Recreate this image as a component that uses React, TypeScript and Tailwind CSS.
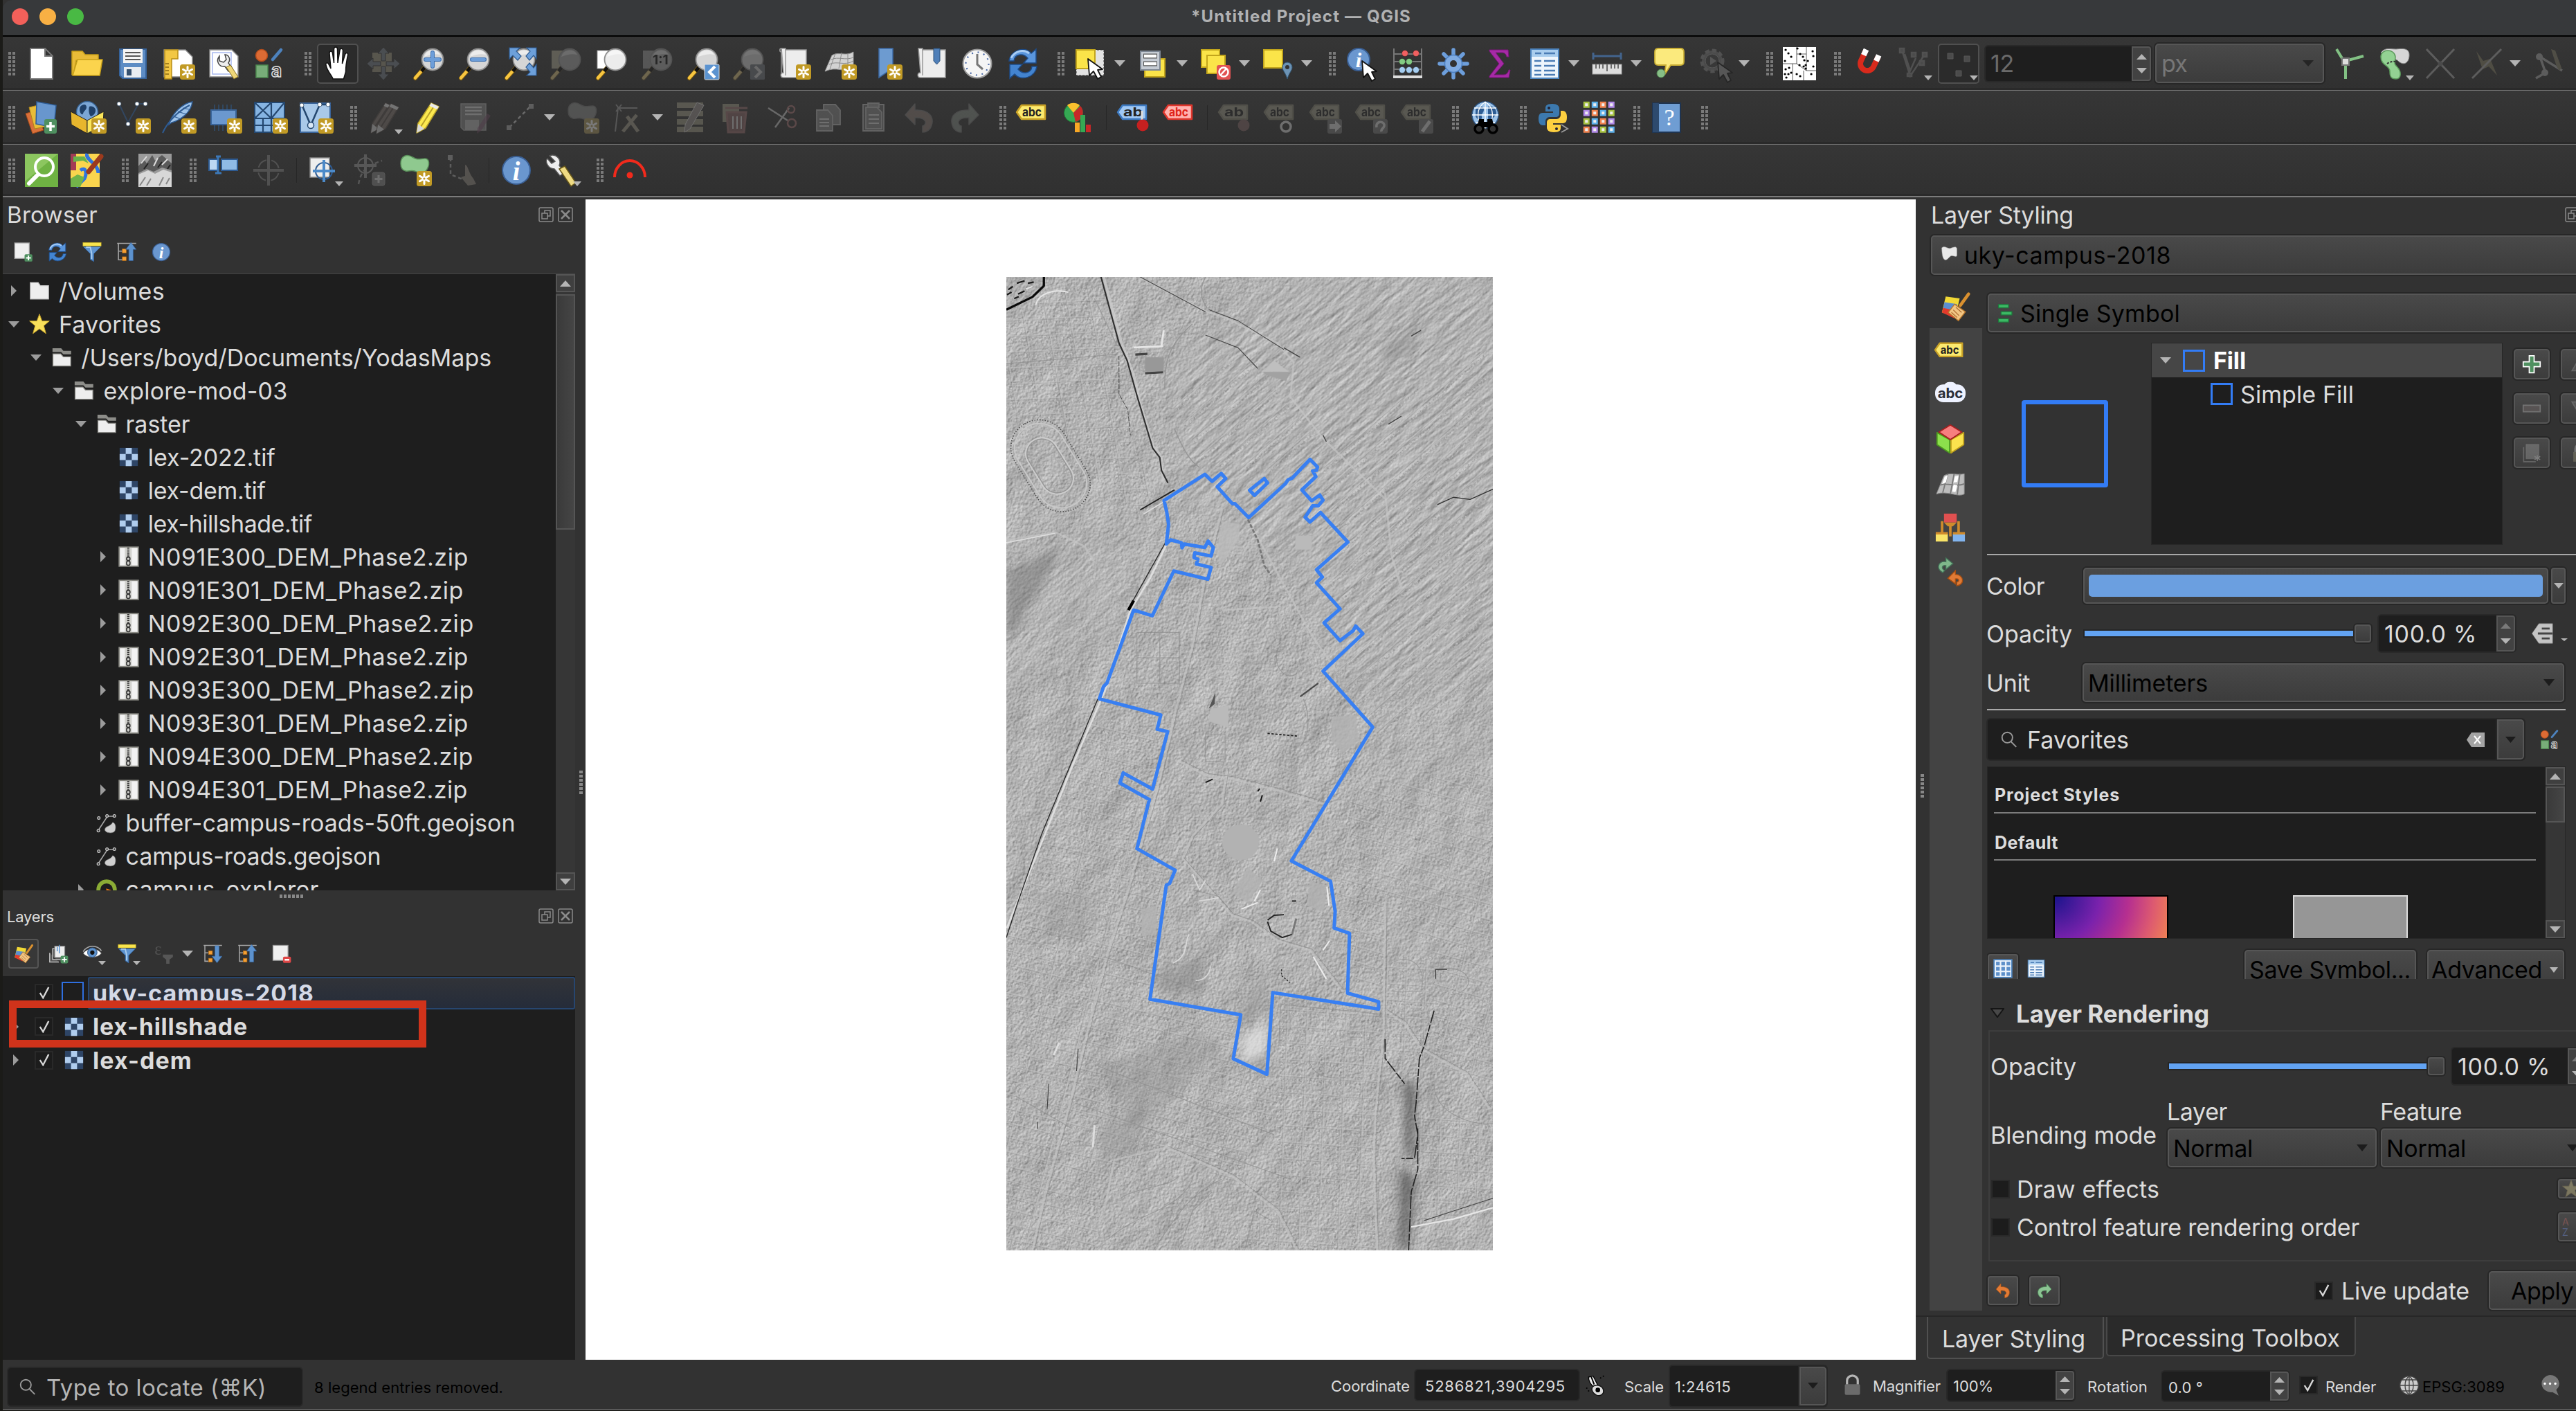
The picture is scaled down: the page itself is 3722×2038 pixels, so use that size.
import React, { useLayoutEffect, useRef, type ReactNode } from "react";

function T({ c = "", w, children }: { c?: string; w?: number; children: string }) {
  const ref = useRef<HTMLSpanElement>(null);
  useLayoutEffect(() => {
    const el = ref.current;
    if (!el || !w) return;
    el.style.letterSpacing = "0px";
    const natural = el.getBoundingClientRect().width;
    el.style.letterSpacing = `${(w - natural) / children.length}px`;
  }, [w, children]);
  return (
    <span ref={ref} className={`inline-block shrink-0 -translate-x-px translate-y-px whitespace-pre ${c}`}>
      {children}
    </span>
  );
}

/* ---------- icon parts ---------- */
const Badge = ({ x = 26, y = 25 }: { x?: number; y?: number }) => (
  <g transform={`translate(${x} ${y})`}>
    <rect width="22" height="22" rx="3.5" fill="#c19a25" />
    <path d="M11 3.5v15M4.5 7.2l13 7.6M4.5 14.8l13-7.6" stroke="#fff" strokeWidth="3" strokeLinecap="round" />
    <circle cx="11" cy="11" r="1.6" fill="#c19a25" />
  </g>
);
const Glass = ({ fill = "#d6d6d6", children }: { fill?: string; children?: ReactNode }) => (
  <g>
    <path d="M4 45L17 30" stroke="#7a5a10" strokeWidth="6" strokeLinecap="round" />
    <path d="M4 44.500L12 35.500" stroke="#f8c640" strokeWidth="4.500" strokeLinecap="round" />
    <path d="M13 35l5-6" stroke="#111" strokeWidth="5" />
    <circle cx="29" cy="18" r="15.500" fill={fill} stroke="#8e8e8e" strokeWidth="1.800" />
    <path d="M17 14a12.500 12.500 0 0 1 23-3c-8-2-15 0-23 3z" fill="#fff" opacity=".55" />
    {children}
  </g>
);
const Label = ({ f = "#fcea6f", s = "#c9a227", t = "#222", text = "abc" }: { f?: string; s?: string; t?: string; text?: string }) => (
  <g>
    <path d="M1 16L8 6H42V26H8Z" fill={f} stroke={s} strokeWidth="2.500" strokeLinejoin="round" />
    <text x="9" y="21.500" fontSize="17" fontWeight="700" fontFamily="Inter, sans-serif" textLength="28" lengthAdjust="spacingAndGlyphs" fill={t}>
      {text}
    </text>
  </g>
);
const Node = ({ x, y, f = "#fff" }: { x: number; y: number; f?: string }) => <circle cx={x} cy={y} r="3" fill={f} stroke="#31475f" strokeWidth=".8" />;
const Pencil = ({ a = "#fce94f", b = "#b8a02a" }: { a?: string; b?: string }) => (
  <g>
    <path d="M27 3l11 5-19 31-13 7 2-14z" fill={a} stroke={b} strokeWidth="1.500" strokeLinejoin="round" />
    <path d="M32 6L12 37" stroke={b} strokeWidth="2" />
    <path d="M27 3l11 5-2.500 4-11-5z" fill="#e9e9e9" />
    <path d="M8 33l9 7-11 6z" fill="#d9d9d9" />
  </g>
);
const Refresh = () => (
  <g>
    <path d="M4 20C6 4 27-2 36 9l7-6v20H25l6-7C24 8 12 10 11 20z" fill="#5a96dd" stroke="#1e4b86" strokeWidth="1.500" />
    <path d="M44 28C42 44 21 50 12 39l-7 6V25h18l-6 7c7 8 19 6 20-4z" fill="#4384d0" stroke="#1e4b86" strokeWidth="1.500" />
    <path d="M7 16C12 5 25 3 33 9" stroke="#a9cdf5" strokeWidth="3" fill="none" />
  </g>
);
const Info = ({ r = 20, x = 24, y = 24 }: { r?: number; x?: number; y?: number }) => (
  <g>
    <circle cx={x} cy={y} r={r} fill="#6a97cf" stroke="#3a5f94" strokeWidth="2" />
    <text x={x} y={y + r * 0.68} textAnchor="middle" fontSize={r * 1.9} fontStyle="italic" fontWeight="700" fontFamily="Liberation Serif, serif" fill="#fff">
      i
    </text>
  </g>
);
const Cursor = ({ x, y, f = "#fff" }: { x: number; y: number; f?: string }) => (
  <path transform={`translate(${x} ${y})`} d="M0 0L2 24 8 18 14 29 19 26 14 16 21 15Z" fill={f} stroke="#111" strokeWidth="1.800" strokeLinejoin="round" />
);
const Styles = () => (
  <g>
    <circle cx="12" cy="12" r="8.500" fill="#dd6b34" stroke="#b34d1c" strokeWidth="1.500" />
    <path d="M28 18L40 4" stroke="#4d82bd" strokeWidth="4.500" strokeLinecap="round" />
    <rect x="4" y="26" width="17" height="18" fill="#78ad79" stroke="#4d8a50" strokeWidth="1.500" />
    <text x="26" y="43" fontSize="26" fontWeight="700" fontFamily="Inter, sans-serif" fill="#333" stroke="#ddd" strokeWidth="1.500">
      a
    </text>
  </g>
);
const Table = () => (
  <g>
    <rect x="4" y="3" width="40" height="42" fill="#eef5fc" stroke="#4f86c0" strokeWidth="2" />
    <rect x="5" y="4" width="38" height="10" fill="#a9cdee" />
    <path d="M10 9h9M23 9h16M9 20h10M23 20h16M9 27h10M23 27h16M9 34h10M23 34h16M9 40h10M23 40h16" stroke="#4b7cb5" strokeWidth="2.500" />
  </g>
);
const Brush = () => (
  <g>
    <path d="M8 8l22 3-7 30L2 33z" fill="#f2d935" />
    <path d="M6 17l20 3-2 10-20-3z" fill="#5b8ed1" />
    <path d="M4 26l20 4-3 12L2 33z" fill="#e23a2c" />
    <path d="M44 4L31 22" stroke="#d9902f" strokeWidth="5" strokeLinecap="round" />
    <path d="M22 20l17 12-11 14-16-13z" fill="#f1c583" stroke="#b9772c" strokeWidth="1.500" />
    <path d="M20 29l9 9M24 25l9 8M17 33l9 8" stroke="#a8652b" strokeWidth="1.200" />
  </g>
);
const Undo = ({ c = "#e27b35", d = "#a34e13" }: { c?: string; d?: string }) => (
  <path d="M4 20L18 4v9c20-1 28 10 24 22-2 7-8 10-13 10v-9c6-1 8-13-11-12v10z" fill={c} stroke={d} strokeWidth="1.500" strokeLinejoin="round" />
);
const Funnel = () => (
  <g>
    <rect x="3" y="2" width="42" height="8" fill="#f8e44d" stroke="#c7ac20" />
    <path d="M4 12h40L28 28v18l-8-5V28z" fill="#5f94cf" stroke="#31619b" strokeWidth="1.500" />
    <path d="M10 13h10l3 14v13" stroke="#a9cdf0" strokeWidth="3" fill="none" />
  </g>
);
const TreeArrow = ({ up }: { up?: boolean }) => (
  <g>
    <path d="M2 4h44M5 4v38h9M5 22h9" stroke="#a5a5a5" strokeWidth="2.500" fill="none" />
    <rect x="14" y="17" width="9" height="9" fill="#f5a034" stroke="#b86c12" />
    <rect x="14" y="35" width="9" height="9" fill="#f5a034" stroke="#b86c12" />
    {up ? <path d="M34 2l12 16h-7v26H29V18h-7z" fill="#5d92cd" stroke="#31619b" /> : <path d="M34 46l12-16h-7V5H29v25h-7z" fill="#5d92cd" stroke="#31619b" />}
  </g>
);
const Globe = () => (
  <g>
    <circle cx="24" cy="20" r="19" fill="#9cc3ea" stroke="#2e5684" strokeWidth="1.500" />
    <path d="M10 12c6-6 12-5 12 0s-4 6-3 11-6 6-9-1zM28 8c8-2 12 4 12 9s-5 5-6 11-6 2-6-5z" fill="#2d5c93" />
    <path d="M5 20h38M24 1v38M8 10h32M10 31h28M24 1c-14 9-14 29 0 38M24 1c14 9 14 29 0 38" stroke="#fff" strokeWidth="1.300" fill="none" />
  </g>
);
const Poly = ({ f = "#8fc98f", s = "#5a915a" }: { f?: string; s?: string }) => (
  <path d="M3 14C3 3 12 0 20 5s11 2 18 2 7 10 2 17-12 3-17 1-8 1-13 0S3 20 3 14z" fill={f} stroke={s} strokeWidth="1.500" />
);

const ICONS: Record<string, ReactNode> = {
  new: <path d="M8 2h21l11 11v33H8z M29 2v11h11" fill="#fff" stroke="#777" strokeWidth="2" />,
  open: (
    <g stroke="#c8a018" strokeWidth="1.500" strokeLinejoin="round">
      <path d="M2 6h15l4 5h19v8H8L4 40H2z" fill="#e8bb38" />
      <path d="M10 18h36l-4 23H3z" fill="#fbd44d" />
    </g>
  ),
  save: (
    <g>
      <path d="M5 3h38v42H9l-4-4z" fill="#5d8cc4" stroke="#36639b" strokeWidth="2" />
      <rect x="10" y="3" width="28" height="20" fill="#f4f4f4" />
      <path d="M13 8h22M13 13h22M13 18h22" stroke="#555" strokeWidth="2.200" />
      <rect x="11" y="29" width="25" height="15" fill="#e9edf2" />
      <rect x="15" y="32" width="7" height="9" fill="#36516f" />
    </g>
  ),
  layout: (
    <g>
      <path d="M3 4h31l10 10v29H3z" fill="#fff" stroke="#888" strokeWidth="1.500" />
      <path d="M4 4h19v13h-9v29H4z" fill="#f2c744" stroke="#b88f17" strokeWidth="1.500" />
      <path d="M5 24h5M5 29h5M5 34h5M5 39h5" stroke="#8a6a10" strokeWidth="1.500" />
      <Badge />
    </g>
  ),
  layoutmgr: (
    <g>
      <path d="M3 4h32l9 9v30H3z" fill="#fff" stroke="#888" strokeWidth="1.500" />
      <path d="M7 8h27v31H7z" fill="none" stroke="#a8b8ee" strokeWidth="1.500" />
      <path d="M17 13c-6 8 0 16 8 15l5 7 6-4-6-8c4-6 0-12-5-12l2 7-4 4-6-2z" fill="#eee" stroke="#444" strokeWidth="1.500" />
      <path d="M27 29l11 17 6-3-11-17z" fill="#efd778" stroke="#8a7320" />
    </g>
  ),
  styles: <Styles />,
  hand: (
    <path
      d="M17 46c-1-5-8-10-10-20-1-4 3-4 4-1l3 6-2-22c0-4 4-4 4.500 0l2 14V3c0-4 5-4 5 0l.5 20L27 5c.5-4 4.500-3 4.500 0l-1 19 4-13c1-4 5-3 4 1-2 9-3 17-3 24l-3 10z"
      fill="#fff"
      stroke="#111"
      strokeWidth="1.500"
    />
  ),
  pansel: (
    <g fill="#6d7f96">
      <rect x="8" y="8" width="28" height="28" fill="#a29566" />
      <path d="M24 0l8 9h-5v11h-6V9h-5zM24 48l8-9h-5V28h-6v11h-5zM0 24l9-8v5h11v6H9v5zM48 24l-9-8v5H28v6h11v5z" stroke="#333" />
    </g>
  ),
  zoomin: (
    <Glass>
      <path d="M29 8v20M19 18h20" stroke="#3b6fb0" strokeWidth="6" strokeLinecap="round" />
      <path d="M29 8v20M19 18h20" stroke="#6d9ed9" strokeWidth="4" strokeLinecap="round" />
    </Glass>
  ),
  zoomout: (
    <Glass>
      <path d="M20 18h18" stroke="#3b6fb0" strokeWidth="6" strokeLinecap="round" />
      <path d="M20 18h18" stroke="#6d9ed9" strokeWidth="4" strokeLinecap="round" />
    </Glass>
  ),
  zoomfull: (
    <g>
      <Glass />
      <path d="M8 1h15l-5 5 7 7-5 6-7-7-5 5zM47 1H33l5 5-6 7 5 6 6-7 4 5zM47 41H33l5-5-6-7 5-6 6 7 4-5z" fill="#6da0da" stroke="#2e5b92" strokeWidth="1.200" />
    </g>
  ),
  zoomsel: (
    <g>
      <rect x="3" y="5" width="22" height="26" fill="#b5ac7d" />
      <Glass fill="#a5a5a5" />
    </g>
  ),
  zoomlayer: (
    <g>
      <rect x="3" y="5" width="22" height="26" fill="#fff" stroke="#999" />
      <Glass fill="#ececec" />
    </g>
  ),
  zoom11: (
    <g>
      <rect x="3" y="5" width="22" height="26" fill="#999" />
      <Glass fill="#aaa">
        <text x="17" y="25" fontSize="19" fontWeight="700" fontFamily="Inter, sans-serif" fill="#111">
          1:1
        </text>
      </Glass>
    </g>
  ),
  zoomprev: (
    <g>
      <Glass />
      <rect x="26" y="25" width="21" height="22" rx="1.500" fill="#5b93d0" stroke="#ddd" />
      <path d="M41 28l-8 8 8 8" stroke="#fff" strokeWidth="4" fill="none" />
    </g>
  ),
  zoomnext: (
    <g>
      <Glass />
      <rect x="26" y="25" width="21" height="22" rx="1.500" fill="#6b7886" />
      <path d="M33 28l8 8-8 8" stroke="#ccc" strokeWidth="4" fill="none" />
    </g>
  ),
  newmap: (
    <g>
      <path d="M5 2h6v2h30v40H8c-5 0-5-7 0-7z" fill="#ededed" stroke="#999" strokeWidth="1.500" />
      <path d="M5 2c-3 0-3 5 0 5v32M11 3v38" stroke="#999" strokeWidth="1.500" fill="none" />
      <Badge />
    </g>
  ),
  new3d: (
    <g>
      <path d="M12 12c10-6 20 2 31-5v26c-14 4-24-6-41 2z" fill="#d2d2d2" stroke="#999" />
      <path d="M8 25c12-6 22 3 35-5M26 8l-4 23M35 9v24M17 9L9 32M11 18c10-5 20 2 32-3" stroke="#8a8a8a" fill="none" />
      <Badge />
    </g>
  ),
  bookmark: (
    <g>
      <path d="M14 2h20v42l-8-8-12 8z" fill="#6d9bd0" stroke="#3c6aa4" strokeWidth="1.500" />
      <Badge />
    </g>
  ),
  bookmarks: (
    <g>
      <path d="M5 2h6v2h33v40H8c-5 0-5-7 0-7z" fill="#ededed" stroke="#999" strokeWidth="1.500" />
      <path d="M11 3v38" stroke="#999" strokeWidth="1.500" />
      <path d="M27 2h9v18l-4.500 5L27 20z" fill="#4f7fb8" stroke="#2d5078" />
    </g>
  ),
  clock: (
    <g>
      <circle cx="24" cy="24" r="20.500" fill="#f5f5f5" stroke="#9a9a9a" strokeWidth="2" />
      <circle cx="24" cy="24" r="16.500" fill="none" stroke="#4a6aa8" strokeWidth="2.200" strokeDasharray="2 6.640" />
      <path d="M24 10v15l8 7" stroke="#777" strokeWidth="3" fill="none" />
    </g>
  ),
  refresh: <Refresh />,
  select: (
    <g>
      <rect x="3" y="4" width="40" height="37" fill="#e3e3e3" stroke="#333" strokeDasharray="3 2" />
      <rect x="3" y="4" width="27" height="27" fill="#fbe449" stroke="#c2a51c" strokeWidth="2" />
      <Cursor x={20} y={17} />
    </g>
  ),
  selform: (
    <g>
      <rect x="12" y="17" width="29" height="26" fill="#fbe449" stroke="#c2a51c" strokeWidth="2" />
      <rect x="6" y="6" width="28" height="27" fill="#c6ccd4" stroke="#7d8794" strokeWidth="2" />
      <path d="M10 13h20M10 24h20" stroke="#555" strokeWidth="7" />
      <path d="M11 13h18M11 24h18" stroke="#fff" strokeWidth="4.500" />
    </g>
  ),
  desel: (
    <g>
      <rect x="4" y="4" width="26" height="25" fill="#fbe449" stroke="#c2a51c" strokeWidth="2" />
      <rect x="12" y="12" width="26" height="26" fill="#fbe449" stroke="#c2a51c" strokeWidth="2" />
      <rect x="26" y="26" width="20" height="21" rx="3" fill="#e25252" />
      <circle cx="36" cy="36" r="6.500" fill="none" stroke="#fff" strokeWidth="2.500" />
      <path d="M31 41l9-10" stroke="#fff" strokeWidth="2.500" />
    </g>
  ),
  selloc: (
    <g>
      <rect x="4" y="4" width="27" height="26" fill="#fbe449" stroke="#c2a51c" strokeWidth="2" />
      <path d="M38 46c-3-10-7-12-7-17a7 7 0 0 1 14 0c0 5-4 7-7 17z" fill="#6c93b5" stroke="#335877" />
      <circle cx="38" cy="29" r="3" fill="#333" />
    </g>
  ),
  identify: (
    <g>
      <Info r={16} x={19} y={18} />
      <Cursor x={24} y={20} />
    </g>
  ),
  abacus: (
    <g>
      <path d="M4 2v42M44 2v42M4 10h40M4 21h40M4 32h40" stroke="#777" strokeWidth="2" />
      <path d="M3 43h42" stroke="#ddd" strokeWidth="4" />
      <g stroke="#0005">
        <circle cx="20" cy="9" r="4.500" fill="#f06060" />
        <circle cx="36" cy="9" r="4.500" fill="#f06060" />
        <circle cx="16" cy="21" r="4.500" fill="#83cc83" />
        <circle cx="26" cy="21" r="4.500" fill="#83cc83" />
        <circle cx="16" cy="33" r="4.500" fill="#a5cdf0" />
        <circle cx="26" cy="33" r="4.500" fill="#a5cdf0" />
        <circle cx="36" cy="33" r="4.500" fill="#a5cdf0" />
      </g>
    </g>
  ),
  gear: (
    <g>
      <path d="M24 4v40M4 24h40M10 10l28 28M10 38L38 10" stroke="#6d9edb" strokeWidth="5.500" strokeLinecap="round" />
      <circle cx="24" cy="24" r="12.500" fill="#7fabe2" stroke="#4c7fc1" strokeWidth="1.500" />
      <circle cx="24" cy="24" r="5" fill="#323232" />
    </g>
  ),
  sigma: (
    <path d="M10 4h27l1 10h-3c-1-4-3-6-7-6H19l12 16-14 16h13c5 0 7-3 8-7h2l-2 11H10v-2l14-18L10 6z" fill="#a62aa6" stroke="#7a167a" />
  ),
  table: <Table />,
  measure: (
    <g>
      <path d="M4 13h40M4 8v10M44 8v10" stroke="#43648d" strokeWidth="3" />
      <rect x="3" y="25" width="42" height="14" fill="#ddd" stroke="#aaa" />
      <path d="M8 25v6M13 25v6M18 25v6M24 25v10M30 25v6M35 25v6M40 25v6" stroke="#444" strokeWidth="1.500" />
    </g>
  ),
  tip: (
    <g>
      <path d="M8 2h32q5 0 5 5v14q0 5-5 5H26l-9 14 2-14H8q-5 0-5-5V7q0-5 5-5z" fill="#fbea7d" stroke="#c9ae34" strokeWidth="1.800" />
      <circle cx="12" cy="38" r="6" fill="#86be86" stroke="#568a56" />
    </g>
  ),
  action: (
    <g>
      <circle cx="20" cy="20" r="15" fill="#777" stroke="#888" strokeWidth="5" strokeDasharray="6 4" />
      <circle cx="20" cy="20" r="10" fill="#444" stroke="#999" />
      <path d="M17 14l9 6-9 6z" fill="#999" />
      <Cursor x={28} y={22} f="#999" />
    </g>
  ),
  dots: (
    <g>
      <rect width="48" height="48" fill="#fff" />
      <path d="M20 0v24M34 0v10h-14M0 24h20l14 10V10M14 24v24M30 34v14M34 34h14" stroke="#333" strokeWidth=".8" fill="none" />
      <path
        d="M4 4h.1M21 2h.1M8 9h.1M12 14h.1M3 20h.1M25 10h.1M29 14h.1M43 6h.1M44 13h.1M31 19h.1M24 26h.1M30 28h.1M33 26h.1M44 28h.1M4 32h.1M9 30h.1M3 39h.1M8 39h.1M5 44h.1M20 39h.1M25 42h.1M33 31h.1M41 39h.1M36 20h.1M12 37h.1"
        stroke="#000"
        strokeWidth="3.200"
        strokeLinecap="round"
      />
    </g>
  ),
  magnet: (
    <g transform="rotate(-155 24 24)">
      <path d="M14 40V24a10 10 0 0 1 20 0v16" stroke="#d92a1c" strokeWidth="8" fill="none" />
      <path d="M14 33v9M34 33v9" stroke="#fff" strokeWidth="8" />
    </g>
  ),
  snapv: (
    <g stroke="#888" strokeWidth="2.500" fill="#777">
      <path d="M8 4l12 38L40 12M12 10l8 24 8-18" fill="none" />
      <path d="M5 2h6v6H5zM22 8h6v6h-6zM38 8h6v6h-6zM34 20h6v6h-6zM16 38h6v4h-6z" />
    </g>
  ),
  snapdots: <path d="M8 9h8v8H8zM32 13h8v8h-8zM20 34h8v8h-8z" fill="#888" stroke="#aaa" />,
  topo: (
    <g>
      <path d="M6 3l11 18M19 46V24M19 20L45 13" stroke="#82c184" strokeWidth="4" />
      <rect x="14" y="16" width="10" height="10" fill="#ddd" stroke="#777" strokeWidth="2" />
    </g>
  ),
  overlap: (
    <g>
      <path d="M4 8c6-8 14-5 22-5 10-1 20-2 19 10s-10 14-17 6z" fill="#d6d6d6" stroke="#888" />
      <path d="M4 14c0-12 20-12 21 0 0 9-3 9 2 14 8 8 6 18-1 18s-9-3-9-11C17 26 4 27 4 14z" fill="#93d293" stroke="#5b9a5b" strokeWidth="1.500" />
      <path d="M13 24q6-4 12-3" stroke="#333" strokeWidth="2" strokeDasharray="3 2" fill="none" />
    </g>
  ),
  cross: (
    <g>
      <path d="M4 3l40 42M44 3L4 45" stroke="#aaa" strokeWidth="3" />
      <circle cx="24" cy="24" r="3.500" fill="#777" />
    </g>
  ),
  bolt: (
    <g>
      <path d="M10 6l10 14 10-3 10 24-12-13-9 4z" fill="#8c8048" />
      <path d="M46 3L4 45" stroke="#aaa" strokeWidth="3" />
    </g>
  ),
  trace: (
    <g>
      <path d="M6 45l14-8L12 14l32 20" stroke="#aaa" strokeWidth="3.500" fill="none" />
      <circle cx="11" cy="14" r="5" fill="#aaa" />
      <circle cx="19" cy="37" r="5" fill="#aaa" />
      <path d="M28 3l6 2 9 25-3 4-4-6z" fill="#8a8052" />
    </g>
  ),
  /* second row */
  addlayers: (
    <g>
      <path d="M1 18l14-4 12 28-16 5z" fill="#d9703a" stroke="#a24a1a" />
      <path d="M6 9l17-4 6 32-15 3z" fill="#e9bc38" stroke="#ad851a" />
      <path d="M17 1l28 5-3 32-26-5z" fill="#6896cd" stroke="#2f5d96" strokeWidth="1.500" />
      <rect x="28" y="26" width="18" height="21" rx="3" fill="#4f9060" />
      <path d="M37 30v13M31 36.500h12" stroke="#fff" strokeWidth="3.500" />
    </g>
  ),
  gpkg: (
    <g>
      <circle cx="24" cy="16" r="15.500" fill="#7ba6d5" stroke="#35608f" strokeWidth="1.500" />
      <path d="M14 8c5-5 9-3 9 1s-4 5-5 9-7-2-4-10zM27 8c6-2 10 3 9 7s-4 6-6 7-5-7-3-14z" fill="#1f4068" />
      <path d="M0 15l24 13v19L1 34z" fill="#e7b62d" stroke="#222" />
      <path d="M48 15L24 28v19l23-13z" fill="#fbe65b" stroke="#222" />
      <Badge x={30} />
    </g>
  ),
  shp: (
    <g>
      <path d="M4 4l13 27L32 4h10" stroke="#32465f" strokeWidth="2" fill="none" />
      <Node x={4} y={4} />
      <Node x={30} y={4} />
      <Node x={42} y={4} />
      <Node x={17} y={33} />
      <Badge x={28} />
    </g>
  ),
  feather: (
    <g>
      <path d="M44 1C30 3 14 18 10 34l4-3c12-3 28-14 30-30z" fill="#9fc4ea" stroke="#2e5b92" strokeWidth="1.500" />
      <path d="M40 6C24 14 8 30 1 46" stroke="#2e5b92" strokeWidth="2" fill="none" />
      <path d="M17 22l10 4M23 15l12 4M30 10l10 2" stroke="#2e5b92" strokeWidth="1.200" />
      <Badge x={28} />
    </g>
  ),
  chip: (
    <g>
      <path d="M10 5v38M16 5v38M22 5v38M28 5v38M34 5v38" stroke="#31475f" strokeWidth="2" />
      <rect x="5" y="13" width="36" height="21" fill="#6b98cf" stroke="#3a659b" strokeWidth="2" />
      <Badge x={28} />
    </g>
  ),
  mesh: (
    <g>
      <rect x="2" y="2" width="43" height="43" fill="#86b4e2" stroke="#24476f" strokeWidth="2" />
      <path d="M2 25h43M26 2v43M2 2l24 23M26 2L2 25M45 2L26 25M2 35h43M14 25v20" stroke="#24476f" strokeWidth="2.200" />
      <Badge x={28} />
    </g>
  ),
  virtual: (
    <g>
      <rect x="2" y="3" width="43" height="42" fill="#a9c9e9" stroke="#3a659b" strokeWidth="2" />
      <path d="M4 5l13 30L30 5h12" stroke="#24476f" strokeWidth="2.500" fill="none" />
      <Node x={4} y={6} />
      <Node x={30} y={5} />
      <Node x={42} y={5} />
      <circle cx="17" cy="35" r="4.500" fill="#d9e9f8" stroke="#24476f" strokeWidth="1.500" />
      <Badge x={28} />
    </g>
  ),
  pencils: (
    <g>
      <Pencil a="#8a7468" b="#5d4a42" />
      <g transform="translate(8 1)">
        <Pencil a="#8a7468" b="#5d4a42" />
      </g>
    </g>
  ),
  pencil: <Pencil />,
  saveedit: (
    <g>
      <path d="M4 4h36v38H8l-4-4z" fill="#888" stroke="#aaa" strokeWidth="1.500" />
      <path d="M10 9h24M10 14h24M10 19h24" stroke="#ddd" strokeWidth="2.500" />
      <rect x="10" y="27" width="20" height="15" fill="#bbb" />
      <path d="M42 18l5 3-14 22-6 4 1-8z" fill="#a48" opacity=".6" />
    </g>
  ),
  line: (
    <g>
      <path d="M8 38L37 9" stroke="#ccc" strokeWidth="2.500" strokeDasharray="5 4" />
      <path d="M4 35h7v7H4zM36 4h7v7h-7z" fill="#aaa" />
    </g>
  ),
  addpoly: (
    <g>
      <Poly f="#8a8f8a" s="#777" />
      <Badge />
    </g>
  ),
  vertex: (
    <g>
      <path d="M5 44L9 10h28M6 5l8 10M14 5L6 15" stroke="#999" strokeWidth="2" fill="none" />
      <path d="M16 44l20-24M38 44L22 22" stroke="#a59b7a" strokeWidth="5" />
    </g>
  ),
  multiedit: (
    <g>
      <path d="M4 6h38M4 18h38M4 30h38M4 41h38" stroke="#a39b6f" strokeWidth="8" />
      <path d="M33 2l10 4-20 34-8 5 1-11z" fill="#9b8d86" stroke="#ddd" />
    </g>
  ),
  trash: (
    <g>
      <rect x="4" y="4" width="24" height="26" fill="#a39b6f" />
      <path d="M8 10h32M10 16h28l-3 29H12z" fill="#a35c5c" stroke="#b66" strokeWidth="3" />
      <path d="M19 22v18M25 22v18M31 22v18" stroke="#ddd" strokeWidth="2" />
    </g>
  ),
  cut: (
    <g fill="none" strokeWidth="2.500">
      <path d="M4 10l28 18M14 38l20-28" stroke="#ccc" />
      <circle cx="37" cy="12" r="5" stroke="#c66" />
      <circle cx="38" cy="32" r="6" stroke="#c66" />
    </g>
  ),
  copy: (
    <g fill="#888" stroke="#bbb" strokeWidth="1.800">
      <path d="M18 5h17l7 8v21H18z" />
      <path d="M8 13h16l7 8v22H8z" />
      <path d="M12 26h14M12 31h14M12 36h14" stroke="#ddd" />
    </g>
  ),
  paste: (
    <g stroke="#bbb" strokeWidth="1.800">
      <path d="M9 5h30v38H9z" fill="#666" />
      <path d="M13 9h16l7 7v24H13z" fill="#888" />
      <path d="M16 3h16v6H16z" fill="#999" />
      <path d="M17 20h15M17 26h15M17 32h15" stroke="#ddd" />
    </g>
  ),
  undo: <Undo c="#98786a" d="#777" />,
  redo: (
    <g transform="translate(48 0) scale(-1 1)">
      <Undo c="#7d9080" d="#777" />
    </g>
  ),
  label: <Label />,
  diagram: (
    <g>
      <circle cx="17" cy="17" r="13.500" fill="#35a853" stroke="#1e7a37" />
      <path d="M17 17L8 6a14 14 0 0 1 18 0z" fill="#fbc02d" />
      <path d="M17 17l10-10a14 14 0 0 1-7 23z" fill="#c62828" />
      <rect x="19" y="31" width="7" height="14" fill="#f9a825" />
      <rect x="27" y="20" width="7" height="25" fill="#35a853" />
      <rect x="35" y="34" width="7" height="11" fill="#c62828" />
    </g>
  ),
  labelpin: (
    <g>
      <Label f="#9fc8f5" s="#3d79c0" text="ab" />
      <path d="M36 14v18" stroke="#ddd" strokeWidth="3" />
      <circle cx="37" cy="35" r="8.500" fill="#c62020" />
    </g>
  ),
  labelred: <Label f="#ffb3b0" s="#e0362c" t="#e0241a" />,
  labelpin2: (
    <g>
      <Label f="#a39c78" s="#8a8460" text="ab" />
      <circle cx="37" cy="35" r="8.500" fill="#9b6060" />
    </g>
  ),
  labeleye: (
    <g>
      <Label f="#a39c78" s="#8a8460" />
      <circle cx="32" cy="37" r="7" fill="none" stroke="#ddd" strokeWidth="3.500" />
    </g>
  ),
  labelmove: (
    <g>
      <Label f="#a39c78" s="#8a8460" />
      <rect x="26" y="26" width="21" height="21" rx="3" fill="#777" />
      <path d="M29 33h8v-5l9 8.500-9 8.500v-5h-8z" fill="#ddd" />
    </g>
  ),
  labelrot: (
    <g>
      <Label f="#a39c78" s="#8a8460" />
      <rect x="26" y="26" width="21" height="21" rx="3" fill="#777" />
      <path d="M31 38c-2-10 12-10 11-2-1 4-5 4-4 8" stroke="#ddd" strokeWidth="3.500" fill="none" />
    </g>
  ),
  labeledit: (
    <g>
      <Label f="#a39c78" s="#8a8460" />
      <rect x="26" y="26" width="21" height="21" rx="3" fill="#777" />
      <path d="M42 29l-11 15" stroke="#ddd" strokeWidth="5" />
    </g>
  ),
  metasearch: (
    <g>
      <Globe />
      <path d="M15 26h7v4h5v-4h7l3 12H12z" fill="#000" />
      <circle cx="15" cy="40" r="6" fill="#333" stroke="#000" strokeWidth="3.500" />
      <circle cx="35" cy="40" r="6" fill="#333" stroke="#000" strokeWidth="3.500" />
    </g>
  ),
  python: (
    <g>
      <path d="M23 4c-9 0-10 3-10 7v4h11v2H9c-5 0-6 4-6 9s2 9 6 9h4v-6c0-3 3-6 6-6h9c3 0 5-2 5-5v-7c0-4-3-7-10-7z" fill="#3c79ae" />
      <path d="M25 45c9 0 10-3 10-7v-4H24v-2h14c5 0 6-4 6-9s-2-9-6-9h-3v6c0 3-3 6-6 6h-9c-3 0-5 2-5 5v7c0 4 3 7 10 7z" fill="#fdd040" />
      <circle cx="18" cy="10" r="2" fill="#223" />
      <path d="M36 34l9 6-9 5" stroke="#999" strokeWidth="2" fill="none" />
      <circle cx="29" cy="40" r="2" fill="#223" />
    </g>
  ),
  grid: (
    <g strokeWidth="2.500">
      {["#a7c342", "#5db1ea", "#f0824f", "#b189e8", "#b189e8", "#f0824f", "#5db1ea", "#a7c342", "#a7c342", "#5db1ea", "#f0824f", "#b189e8", "#f0824f", "#b189e8", "#a7c342", "#5db1ea"].map((c, i) => (
        <rect key={i} x={3 + (i % 4) * 12} y={2 + Math.floor(i / 4) * 12} width="6.500" height="6.500" fill="#eee" stroke={c} />
      ))}
    </g>
  ),
  help: (
    <g>
      <rect x="4" y="3" width="40" height="42" fill="#6f9dd3" stroke="#1f3450" strokeWidth="2" />
      <rect x="4" y="3" width="9" height="42" fill="#2d4a6e" />
      <text x="28" y="35" textAnchor="middle" fontSize="34" fontFamily="Liberation Serif, serif" fill="#fff">
        ?
      </text>
    </g>
  ),
  /* third row */
  osmfind: (
    <g>
      <rect width="48" height="48" fill="#6fb243" />
      <path d="M0 0h48L0 40z" fill="#8cc65f" />
      <circle cx="28" cy="19" r="13" fill="none" stroke="#fff" strokeWidth="4" />
      <path d="M19 30L6 43" stroke="#fff" strokeWidth="6" strokeLinecap="round" />
    </g>
  ),
  osm: (
    <g>
      <path d="M0 0h42v48H0z" fill="#fad54e" />
      <path d="M0 0h8v24H0z" fill="#a33b55" />
      <path d="M4 4h16l6 10-8-4-14 2z" fill="#67b24b" />
      <path d="M14 24c8-6 10 4 6 12l-12 12M24 0c-4 8 16 14 16 28" stroke="#2f75e0" strokeWidth="5" fill="none" />
      <path d="M0 36l10-6 10 4-6 14H0z" fill="#72b44a" />
      <path d="M44 4L26 26" stroke="#9c3a1d" strokeWidth="7" strokeLinecap="round" />
    </g>
  ),
  relief: (
    <g>
      <rect width="48" height="48" fill="#9a9a9a" />
      <path d="M0 18L8 8l4 6L20 2l4 8 10-8 14 12v10L34 20 22 26 12 22 0 28z" fill="#5a5a5a" />
      <path d="M0 30l14-6 10 5 12-6 12 4v21H0z" fill="#d8d8d8" />
      <path d="M2 46l8-12M12 46l6-10M30 46l6-12M40 44l5-9" stroke="#888" strokeWidth="2" />
      <path d="M4 14l8-10M22 18l6-12M34 16l8-8" stroke="#ddd" strokeWidth="2" />
      <path d="M8 22l6-8M28 20l6-8M42 22l4-6" stroke="#222" strokeWidth="2" />
    </g>
  ),
  dock: (
    <g>
      <path d="M4 8h13v16H4z" fill="#bcd8f2" stroke="#2e5b92" strokeWidth="2" />
      <path d="M22 8h23v16H22z" fill="#8fbbe6" stroke="#2e5b92" strokeWidth="2" />
      <path d="M14 4h5M21 4h-4v24h-4M17 28h5" stroke="#3c78b8" strokeWidth="3" fill="none" />
    </g>
  ),
  target: (
    <g fill="none" stroke="#8a8a8a" strokeWidth="4">
      <circle cx="24" cy="24" r="15" strokeWidth="2" strokeDasharray="16 7.500" strokeDashoffset="-4" />
      <path d="M24 2v44M2 24h44" />
    </g>
  ),
  gpspoint: (
    <g>
      <rect x="4" y="6" width="28" height="28" fill="#eee" stroke="#888" strokeWidth="1.500" />
      <circle cx="24" cy="25" r="12" fill="none" stroke="#2e5b92" strokeWidth="2" />
      <path d="M24 9v32M8 25h32" stroke="#4c8ac9" strokeWidth="4" />
    </g>
  ),
  gpsadd: (
    <g fill="none" stroke="#9a9a9a">
      <circle cx="18" cy="17" r="11" strokeWidth="2" />
      <path d="M18 1v34M2 17h32" strokeWidth="4" />
      <path d="M8 44c4-24 18-28 34-34" strokeWidth="2.500" strokeDasharray="6 4" />
      <rect x="28" y="27" width="18" height="19" rx="3" fill="#888" />
      <path d="M37 31v11M31.500 36.500h11" stroke="#ddd" strokeWidth="3" />
    </g>
  ),
  gpspoly: (
    <g>
      <Poly />
      <Badge />
    </g>
  ),
  gpshand: (
    <g>
      <path d="M9 6v24l20 8" stroke="#aaa" strokeWidth="2.500" fill="none" strokeDasharray="5 4" />
      <path d="M5 2h7v7H5z" fill="#aaa" />
      <path d="M30 16c4 0 5 12 12 20l4 8-12 2-10-12 6-2z" fill="#9b8d7a" />
    </g>
  ),
  info: <Info />,
  wrench: (
    <g>
      <path d="M6 3c9-4 18 5 14 14l8 10-7 5-8-10C3 22-1 10 3 7l6 7 5-3z" fill="#eee" stroke="#555" strokeWidth="1.500" />
      <path d="M20 22l8-4 16 24-7 5z" fill="#efdb83" stroke="#6a5a1a" strokeWidth="1.500" />
    </g>
  ),
  signal: (
    <g>
      <path d="M2 34A22 24 0 0 1 46 34" stroke="#f22a1c" strokeWidth="4" fill="none" />
      <circle cx="24" cy="31" r="4.500" fill="#f22a1c" />
    </g>
  ),
  /* panels */
  addbrowser: (
    <g>
      <rect x="5" y="3" width="34" height="36" fill="#f0f0f0" stroke="#999" strokeWidth="2" />
      <rect x="28" y="29" width="18" height="17" rx="3" fill="#4f9060" />
      <path d="M37 32v11M31.500 37.500h11" stroke="#fff" strokeWidth="3" />
    </g>
  ),
  funnel: <Funnel />,
  collapse: <TreeArrow up />,
  expand: <TreeArrow />,
  brush: <Brush />,
  addgroup: (
    <g>
      <path d="M3 22v22h22M10 12h24v26H10z" fill="#555" stroke="#bbb" strokeWidth="2.500" />
      <rect x="15" y="6" width="24" height="27" fill="#eee" stroke="#888" strokeWidth="2" />
      <path d="M26 3v20M21 8v10" stroke="#5b93d0" strokeWidth="2.500" />
      <rect x="29" y="29" width="18" height="18" rx="3" fill="#4f9060" />
      <path d="M38 32v12M32 38h12" stroke="#fff" strokeWidth="3" />
    </g>
  ),
  eye: (
    <g>
      <path d="M2 24c10-14 32-14 42 0-10 12-32 12-42 0z" fill="#fff" stroke="#555" />
      <circle cx="23" cy="22" r="11" fill="#5d92cd" stroke="#274d7c" strokeWidth="1.500" />
      <circle cx="23" cy="22" r="5" fill="#111" />
      <path d="M2 20C12 4 34 4 44 18" stroke="#aaa" strokeWidth="2.500" fill="none" />
    </g>
  ),
  expr: (
    <g>
      <text x="2" y="26" fontSize="40" fontFamily="Liberation Serif, serif" fill="#888">
        ε
      </text>
      <path d="M22 26h24v6l-8 6v10h-8V38l-8-6z" fill="#999" />
    </g>
  ),
  remove: (
    <g>
      <rect x="4" y="4" width="36" height="36" fill="#f0f0f0" stroke="#999" strokeWidth="2" />
      <rect x="28" y="31" width="19" height="15" rx="3" fill="#e04848" />
      <path d="M32 38.500h11" stroke="#fff" strokeWidth="4" />
    </g>
  ),
  folder: <path d="M3 5h18l5 7h19v31H3z" fill="#eee" stroke="#c9c9c9" strokeWidth="2" />,
  folderopen: (
    <g>
      <path d="M3 3h20l5 6h18v8H28l-5-5H3z" fill="#8d8d89" />
      <path d="M4 16h18l6 7h17v21H4z" fill="#eee" stroke="#8d8d89" strokeWidth="2" />
    </g>
  ),
  star: <path d="M24 1l6 16h17L34 28l5 18-15-11L9 46l5-18L1 17h17z" fill="#f9e05a" stroke="#c9a227" strokeWidth="1.500" />,
  raster: (
    <g>
      <rect x="3" y="3" width="42" height="42" fill="#2e4566" />
      <path d="M17 3h14v14H17zM3 17h14v14H3zM31 17h14v14H31zM17 31h14v14H17z" fill="#b0cdee" />
    </g>
  ),
  zip: (
    <g>
      <rect x="2" y="2" width="44" height="44" fill="#f2f2f2" stroke="#8c8c86" strokeWidth="3" />
      <rect x="15" y="3" width="16" height="42" fill="#d2d2ce" />
      <path d="M23 3v21" stroke="#333" strokeWidth="5" strokeDasharray="2.500 2" />
      <rect x="19" y="25" width="8" height="8" rx="4" fill="none" stroke="#333" strokeWidth="2.500" />
      <rect x="19" y="34" width="8" height="10" rx="4" fill="none" stroke="#333" strokeWidth="2.500" />
    </g>
  ),
  geojson: (
    <g>
      <path d="M5 40L26 8h18" stroke="#aaa" strokeWidth="2.500" fill="none" />
      <path d="M20 40c-1-10 14-8 18-18 8 2 8 14 5 20s-20 6-23-2z" fill="#cfcfcf" stroke="#777" />
      <g fill="#333" stroke="#ccc" strokeWidth="2">
        <circle cx="6" cy="12" r="3" />
        <circle cx="25" cy="7" r="3" />
        <circle cx="42" cy="7" r="3" />
        <circle cx="5" cy="41" r="3" />
      </g>
    </g>
  ),
  qgis: (
    <g>
      <circle cx="24" cy="24" r="19" fill="none" stroke="#8bac35" strokeWidth="9" />
      <path d="M23 21l12 4-10 12z" fill="#ee7913" />
    </g>
  ),
  polylayer: <path d="M2 8c10-8 16 4 26 1 8-3 16-6 18 1v20c-2 6-8 1-14 1-8-1-10 12-20 12C3 40 3 20 2 8z" fill="#e8e8e8" stroke="#999" />,
  single: (
    <g fill="#3cb864" stroke="#1c7a3c" strokeWidth="2">
      <rect x="6" y="3" width="24" height="8" />
      <rect x="12" y="20" width="26" height="8" />
      <rect x="6" y="37" width="24" height="8" />
    </g>
  ),
  mask: (
    <g>
      <rect x="0" y="8" width="48" height="28" rx="13" fill="#eef2ff" />
      <rect x="14" y="4" width="20" height="30" rx="8" fill="#eef2ff" />
      <text x="24" y="29" textAnchor="middle" fontSize="22" fontWeight="700" fontFamily="Inter, sans-serif" fill="#2b2f3a" textLength="40" lengthAdjust="spacingAndGlyphs">
        abc
      </text>
    </g>
  ),
  cube: (
    <g strokeWidth="2" strokeLinejoin="round">
      <path d="M3 14l20 11v21L3 33z" fill="#8ce04c" stroke="#4d9a1f" />
      <path d="M45 14L25 25v21l20-13z" fill="#fbe34e" stroke="#bfa01c" />
      <path d="M24 2l18 11-18 12L6 13z" fill="#f77f7f" stroke="#a82020" />
    </g>
  ),
  threed: (
    <g>
      <path d="M14 12c10-6 20 0 32-3v32c-10 6-26-6-44 0z" fill="#bdbdbd" stroke="#888" />
      <path d="M20 9l-8 30M30 9l-6 32M39 9l-4 33M8 27c12-5 24 4 38-2" stroke="#7a7a7a" strokeWidth="2" fill="none" />
      <path d="M15 14l5-3-3 12-6 2zM29 26l6 1-3 11-5-1zM31 13l6-1-2 10-6 1z" fill="#fff" />
    </g>
  ),
  brushes: (
    <g>
      <path d="M11 14v20M24 18v20M37 14v20" stroke="#cf8b2c" strokeWidth="4" />
      <rect x="14" y="2" width="20" height="14" fill="#e05050" />
      <path d="M14 16h20l-6 6h-8z" fill="#cf8b2c" />
      <rect x="1" y="34" width="19" height="12" fill="#f9e468" />
      <rect x="28" y="34" width="19" height="12" fill="#82b4ee" />
      <path d="M1 33h19M28 33h19" stroke="#cf8b2c" strokeWidth="4" />
    </g>
  ),
  history: (
    <g>
      <path d="M12 25C0 18 6 6 17 8V2l11 9-11 9v-6c-6-1-8 4-2 8z" fill="#7fb78b" stroke="#44755a" strokeWidth="1.500" />
      <path d="M20 34L32 22v6c13 0 16 16 2 18v-6c5-1 4-6-2-5v8z" fill="#e07a35" stroke="#a34e13" strokeWidth="1.500" />
    </g>
  ),
  bigundo: <Undo />,
  bigredo: (
    <g transform="translate(48 0) scale(-1 1)">
      <Undo c="#8cc493" d="#4a8a55" />
    </g>
  ),
  gridview: (
    <g>
      <rect x="2" y="2" width="44" height="44" fill="#eaf2fb" stroke="#4f86c0" strokeWidth="3" />
      {[0, 1, 2].map((r) => [0, 1, 2].map((c) => <rect key={`${r}${c}`} x={7 + c * 13} y={7 + r * 13} width="9" height="9" fill="#5d8fc9" />))}
    </g>
  ),
  dd: (
    <g>
      <path d="M2 24L16 4h28v40H16z" fill="#c4c4c4" stroke="#888" />
      <path d="M22 14h16M14 24h30M22 34h16" stroke="#444" strokeWidth="4" />
    </g>
  ),
  plus: <path d="M18 3h12v15h15v12H30v15H18V30H3V18h15z" fill="#4f9060" stroke="#fff" strokeWidth="3" />,
  minus: <rect x="3" y="16" width="42" height="16" fill="#8a7070" stroke="#ccc" strokeWidth="3" />,
  dup: (
    <g>
      <path d="M10 3h32v36H10z" fill="#aaa" stroke="#ccc" />
      <path d="M4 10v36h30" stroke="#aaa" strokeWidth="3" fill="none" />
      <path d="M38 30v14M31 33l14 8M31 41l14-8" stroke="#eee" strokeWidth="2.500" />
    </g>
  ),
  upa: <path d="M24 6l20 34H4z" fill="#777" stroke="#aaa" strokeWidth="3" />,
  downa: <path d="M24 42L4 8h40z" fill="#777" stroke="#aaa" strokeWidth="3" />,
  lockb: (
    <g>
      <path d="M12 24V14a12 11 0 0 1 24 0v10" fill="none" stroke="#ccc" strokeWidth="5" />
      <rect x="7" y="22" width="34" height="24" fill="#a39b5f" />
    </g>
  ),
  crs: (
    <g fill="none" stroke="#444" strokeWidth="2">
      <circle cx="24" cy="24" r="20" fill="#ccc" />
      <path d="M4 24h40M24 4v40M9 12h30M9 36h30M24 4c-12 8-12 32 0 40M24 4c12 8 12 32 0 40" />
    </g>
  ),
  bubble: (
    <g>
      <path d="M24 3a20 18 0 1 0 5 36l13 7-5-12A20 18 0 0 0 24 3z" fill="#777" />
      <path d="M13 21h.1M24 21h.1M35 21h.1" stroke="#fff" strokeWidth="5" strokeLinecap="round" />
    </g>
  ),
  lock: (
    <g>
      <path d="M12 24V14a12 11 0 0 1 24 0v10" fill="none" stroke="#b5b5b5" strokeWidth="5" />
      <rect x="7" y="22" width="34" height="24" rx="3" fill="#6b6b6b" />
    </g>
  ),
  mouse: (
    <g>
      <path d="M8 6l10-2 10 20-8 4C12 22 8 14 8 6z" fill="#eee" stroke="#000" strokeWidth="2" />
      <path d="M14 6l6 16" stroke="#000" strokeWidth="3" />
      <path d="M16 28c6-8 22-4 24 6s-8 14-15 11-12-11-9-17z" fill="#ddd" stroke="#111" strokeWidth="2" />
      <circle cx="28" cy="34" r="5" fill="#000" />
      <path d="M34 8h.1M40 4h.1M4 30h.1M8 36h.1" stroke="#000" strokeWidth="3" strokeLinecap="round" />
    </g>
  ),
  search: (
    <g fill="none" stroke="#9a9a9a" strokeWidth="3.500">
      <circle cx="19" cy="19" r="14" />
      <path d="M29 30l14 14" />
    </g>
  ),
};

function Icon({ n, c = "size-[48px]", dim }: { n: string; c?: string; dim?: boolean }) {
  return (
    <svg viewBox="0 0 48 48" fill="none" className={`shrink-0 overflow-visible ${c} ${dim ? "opacity-35 grayscale-[0.5]" : ""}`}>
      {ICONS[n]}
    </svg>
  );
}

const Tri = ({ c = "w-[16px] h-[9px]", f = "#b4b4b4", up }: { c?: string; f?: string; up?: boolean }) => (
  <svg viewBox="0 0 16 9" preserveAspectRatio="none" className={`shrink-0 ${c}`}>
    <path d={up ? "M0 9L8 0L16 9Z" : "M0 0H16L8 9Z"} fill={f} />
  </svg>
);

/* Toolbar tokens: "|" grip, "/" separator, "v" drop arrow, "-name" disabled, "name>" with menu mark. */
function Tool({ t }: { t: string }) {
  if (t === "|" || t === "||")
    return (
      <div className={`flex h-full shrink-0 items-center justify-end pr-[5px] ${t === "||" ? "w-[27px]" : "w-[32px]"}`}>
        <svg viewBox="0 0 10 34" className="h-[34px] w-[10px]">
          {[0, 6, 12, 18, 24, 30].map((y) => (
            <path key={y} d={`M0 ${y}h4v4h-4zM6 ${y}h4v4h-4z`} fill="#7a7a7a" />
          ))}
        </svg>
      </div>
    );
  if (t === "/") return <div className="ml-[7px] mr-[6px] h-[36px] w-px shrink-0 self-center bg-[#272727]" />;
  if (t === "v")
    return (
      <div className="flex w-[24px] shrink-0 items-center pl-[1px]">
        <Tri />
      </div>
    );
  const dim = t.startsWith("-");
  const menu = t.endsWith(">");
  const name = t.replace("-", "").replace(">", "");
  const boxed = name === "hand" || name === "snapdots";
  return (
    <div className="relative flex h-full w-[66px] shrink-0 items-center justify-center">
      <div className={`flex h-[58px] w-[60px] items-center justify-center ${boxed ? "rounded-[5px] border-2 border-[#505050] bg-[#2b2b2b]" : ""}`}>
        <Icon n={name} dim={dim} />
      </div>
      {menu && <Tri c="absolute bottom-[14px] right-[5px] w-[12px] h-[7px]" />}
    </div>
  );
}
const Tools = ({ s }: { s: string }) => (
  <>
    {s.split(" ").map((t, i) => (
      <Tool key={i} t={t} />
    ))}
  </>
);

/* ---------- controls ---------- */
const Raised = ({ c, children }: { c: string; children?: ReactNode }) => (
  <div className={`shrink-0 border-2 border-[#565656] bg-linear-to-b from-[#494949] to-[#3c3c3c] shadow-[0_0_0_2px_#272727] ${c}`}>{children}</div>
);
const Spin = ({ c, dim }: { c: string; dim?: boolean }) => (
  <div className={`flex shrink-0 flex-col items-center justify-between rounded-r-[4px] border-2 border-[#565656] bg-[#424242] ${c}`}>
    <Tri up c="h-[8px] w-[15px]" f={dim ? "#7a7a7a" : "#b4b4b4"} />
    <Tri c="h-[8px] w-[15px]" />
  </div>
);
const Field = ({ c, children }: { c: string; children?: ReactNode }) => (
  <div className={`flex shrink-0 items-center rounded-[4px] bg-[#1e1e1e] shadow-[0_0_0_2px_#292929] ${c}`}>{children}</div>
);
const Check = ({ on, c = "" }: { on?: boolean; c?: string }) => (
  <div className={`flex h-[27px] w-[27px] shrink-0 items-center justify-center border-2 border-[#292929] bg-[#1c1c1c] ${c}`}>
    {on && (
      <svg viewBox="0 0 20 20" className="h-[18px] w-[18px]">
        <path d="M3 10l5 8L17 1" fill="none" stroke="#d8d8d8" strokeWidth="2.600" />
      </svg>
    )}
  </div>
);
const WinBtns = ({ only }: { only?: boolean }) => (
  <svg viewBox="0 0 50 22" className="h-[22px] w-[50px] shrink-0" fill="none" stroke="#8a8a8a" strokeWidth="1.500">
    <rect x="1" y="1" width="20" height="20" rx="2" />
    <path d="M5 9h8v8H5zM9 9V5h8v8h-4" />
    {!only && (
      <g>
        <rect x="29" y="1" width="20" height="20" rx="2" />
        <path d="M33 5l12 12M45 5L33 17" strokeWidth="2.500" />
      </g>
    )}
  </svg>
);

/* ---------- browser tree ---------- */
type TreeRow = [number, string, string, string, number];
const TREE: TreeRow[] = [
  [0, "r", "folder", "/Volumes", 153],
  [0, "d", "star", "Favorites", 148],
  [1, "d", "folderopen", "/Users/boyd/Documents/YodasMaps", 593],
  [2, "d", "folderopen", "explore-mod-03", 266],
  [3, "d", "folderopen", "raster", 93],
  [4, "", "raster", "lex-2022.tif", 184],
  [4, "", "raster", "lex-dem.tif", 170],
  [4, "", "raster", "lex-hillshade.tif", 237],
  [4, "r", "zip", "N091E300_DEM_Phase2.zip", 463],
  [4, "r", "zip", "N091E301_DEM_Phase2.zip", 456],
  [4, "r", "zip", "N092E300_DEM_Phase2.zip", 471],
  [4, "r", "zip", "N092E301_DEM_Phase2.zip", 463],
  [4, "r", "zip", "N093E300_DEM_Phase2.zip", 471],
  [4, "r", "zip", "N093E301_DEM_Phase2.zip", 463],
  [4, "r", "zip", "N094E300_DEM_Phase2.zip", 470],
  [4, "r", "zip", "N094E301_DEM_Phase2.zip", 462],
  [3, "", "geojson", "buffer-campus-roads-50ft.geojson", 563],
  [3, "", "geojson", "campus-roads.geojson", 369],
  [3, "r", "qgis", "campus_explorer", 279],
];
const Twisty = ({ k }: { k: string }) => (
  <div className="flex w-[16px] shrink-0 items-center justify-center">
    {k === "d" && <Tri c="h-[9px] w-[16px]" f="#9c9c9c" />}
    {k === "r" && (
      <svg viewBox="0 0 8 16" className="h-[16px] w-[8px]">
        <path d="M0 0L8 8L0 16Z" fill="#9c9c9c" />
      </svg>
    )}
  </div>
);
const ScrollBtn = ({ up, c = "h-[26px]" }: { up?: boolean; c?: string }) => (
  <div className={`flex w-full shrink-0 items-center justify-center border-2 border-[#555] bg-[#3f3f3f] ${c}`}>
    <Tri up={up} c="h-[9px] w-[16px]" />
  </div>
);

function Browser() {
  return (
    <div className="flex h-[999px] flex-col">
      <div className="flex h-[46px] items-center justify-between pl-[7px] pr-[3px]">
        <T w={131} c="text-[33px]">Browser</T>
        <WinBtns />
      </div>
      <div className="flex h-[62px] items-center gap-[20px] pl-[14px]">
        <Icon n="addbrowser" c="size-[30px]" />
        <Icon n="refresh" c="size-[30px]" />
        <Icon n="funnel" c="size-[30px]" />
        <Icon n="collapse" c="size-[30px]" />
        <Icon n="info" c="size-[30px]" />
      </div>
      <div className="flex h-[891px] border-t border-[#454545] bg-[#1e1e1e]">
        <div className="h-full grow overflow-hidden">
          {TREE.map(([lvl, k, ic, label, w]) => (
            <div key={label} className="flex h-[48.060px] items-center" style={{ paddingLeft: 8 + lvl * 32.2 }}>
              <Twisty k={k} />
              <Icon n={ic} c="ml-[14px] mr-[14px] size-[30px]" />
              <T w={w} c="text-[34px]">{label}</T>
            </div>
          ))}
        </div>
        <div className="flex w-[28px] shrink-0 flex-col bg-[#363636]">
          <ScrollBtn up />
          <div className="mt-[3px] h-[340px] border-2 border-[#555] bg-linear-to-r from-[#3a3a3a] to-[#454545]" />
          <div className="grow" />
          <ScrollBtn />
        </div>
      </div>
    </div>
  );
}

const LAYERS: [string, string, string, number][] = [
  ["", "box", "uky-campus-2018", 320],
  ["r", "raster", "lex-hillshade", 224],
  ["r", "raster", "lex-dem", 144],
];
function Layers() {
  return (
    <div className="relative flex grow flex-col">
      <div className="flex h-[14px] justify-center pl-[8px] pt-[6px]">
        <div className="h-[5px] w-[35px] bg-[repeating-linear-gradient(90deg,#888_0_4px,transparent_4px_6px)]" />
      </div>
      <div className="flex h-[46px] items-center justify-between pl-[7px] pr-[3px]">
        <T w={68} c="text-[22px]">Layers</T>
        <WinBtns />
      </div>
      <div className="flex h-[62px] items-center">
        <div className="ml-[8px] flex h-[43px] w-[44px] items-center justify-center rounded-[4px] border-2 border-[#555] bg-[#383838]">
          <Icon n="brush" c="size-[29px]" />
        </div>
        <Icon n="addgroup" c="ml-[14px] size-[29px]" />
        <Icon n="eye" c="ml-[20px] size-[30px]" />
        <Tri c="-ml-[7px] mt-[28px] h-[6px] w-[11px]" />
        <Icon n="funnel" c="ml-[16px] size-[29px]" />
        <Tri c="-ml-[6px] mt-[28px] h-[6px] w-[11px]" />
        <Icon n="expr" dim c="ml-[19px] size-[29px]" />
        <Tri c="ml-[12px] h-[9px] w-[16px]" />
        <Icon n="expand" c="ml-[14px] size-[29px]" />
        <Icon n="collapse" c="ml-[21px] size-[29px]" />
        <Icon n="remove" c="ml-[20px] size-[29px]" />
      </div>
      <div className="grow border-t border-[#454545] bg-[#1e1e1e] pt-px">
        {LAYERS.map(([k, ic, label, w], i) => (
          <div key={label} className="flex h-[48.500px] items-center overflow-hidden pl-[11px]">
            <Twisty k={k} />
            <Check on c="ml-[19px] mr-[15px]" />
            {ic === "box" ? <div className="-ml-[3px] mr-[6px] size-[32px] shrink-0 border-2 border-[#2f6fe0]" /> : <Icon n={ic} c="size-[30px] mr-[5px]" />}
            <div className={`flex h-[47px] grow items-center pl-[6px] ${i === 0 ? "rounded-[3px] border-2 border-[#27466f] bg-linear-to-b from-[#313338] to-[#252c3a] text-[#d4d9e6]" : "ml-[2px]"}`}>
              <T w={w} c="text-[34px] font-bold">{label}</T>
            </div>
          </div>
        ))}
      </div>
      {/* annotation frame around the hillshade layer */}
      <div className="absolute left-[9px] top-[159px] h-[68px] w-[603px] border-[11px] border-[#d0331b]" />
    </div>
  );
}

/* ---------- map ---------- */
const CAMPUS =
  "M513 725L638 643L660 665L688 640L702 656L676 682L722 735H730L772 779L885 672L893 660L905 655L960 596L983 620L980 630L968 632L978 650L935 692L965 726L990 708L1000 724L985 742H968L945 778L960 793L992 763L1076 856L980 943L998 966L980 984L1052 1066L1003 1110L1052 1166L1092 1135L1100 1120L1122 1144L1000 1262L1152 1438L903 1859L1023 1923L1037 2018L1034 2070L1081 2087L1075 2275L1170 2302V2325L846 2273L828 2530L725 2481L748 2343L470 2294L520 1935L530 1930L547 1888L430 1820L468 1666L378 1614L388 1582L478 1633L500 1546L524 1452L492 1445L503 1400L315 1349L328 1310L338 1300L420 1070L477 1088L543 947L647 973L657 936L612 925L617 910L605 905L607 890L657 900L664 873L648 853L638 873L575 862L568 874L566 858L533 849L520 862L527 800L521 760ZM775 693L820 656L830 670L790 709Z";

/* Parallel street rows with house-sized ticks either side, used to texture a district. */
function Streets({ clip, angle, cx, cy, gap, len = 1600 }: { clip: string; angle: number; cx: number; cy: number; gap: number; len?: number }) {
  const rows = Array.from({ length: Math.ceil((len * 2) / gap) }, (_, i) => cy - len + i * gap);
  const d = (o: number) => rows.map((y, i) => `M${cx - len + ((i * 37) % 19)} ${y + o}H${cx + len}`).join("");
  return (
    <g clipPath={`url(#${clip})`}>
      <g transform={`rotate(${angle} ${cx} ${cy})`} fill="none">
        <path d={d(0)} stroke="#c4c4c4" strokeWidth="4" opacity=".45" />
        <path d={d(3)} stroke="#888" strokeWidth="1.500" opacity=".45" />
        <path d={d(12)} stroke="#7c7c7c" strokeWidth="5" strokeDasharray="2 9 4 13 2 7" opacity=".4" />
        <path d={d(15)} stroke="#dedede" strokeWidth="4" strokeDasharray="3 11 2 9 5 17" opacity=".45" />
      </g>
    </g>
  );
}

function Hillshade() {
  return (
    <svg viewBox="30 22 1490 3062" preserveAspectRatio="none" className="h-[1406px] w-[703px]">
      <defs>
        <filter id="fine" x="0" y="0" width="100%" height="100%" colorInterpolationFilters="sRGB">
          <feTurbulence type="fractalNoise" baseFrequency="0.13 0.11" numOctaves="3" seed="7" />
          <feColorMatrix values="0 0 0 0 0 0 0 0 0 0 0 0 0 0 0 1 0 0 0 0" />
          <feDiffuseLighting surfaceScale="2.6" diffuseConstant="0.98" lightingColor="#ffffff">
            <feDistantLight azimuth="225" elevation="46" />
          </feDiffuseLighting>
        </filter>
        <filter id="hills" x="0" y="0" width="100%" height="100%" colorInterpolationFilters="sRGB">
          <feTurbulence type="fractalNoise" baseFrequency="0.009 0.007" numOctaves="4" seed="11" />
          <feColorMatrix values="0 0 0 0 0 0 0 0 0 0 0 0 0 0 0 1 0 0 0 0" />
          <feDiffuseLighting surfaceScale="9" diffuseConstant="0.98" lightingColor="#ffffff">
            <feDistantLight azimuth="225" elevation="46" />
          </feDiffuseLighting>
        </filter>
        <filter id="streak" x="0" y="0" width="100%" height="100%" colorInterpolationFilters="sRGB">
          <feTurbulence type="fractalNoise" baseFrequency="0.012 0.06" numOctaves="3" seed="3" />
          <feColorMatrix values="0 0 0 0 0 0 0 0 0 0 0 0 0 0 0 1 0 0 0 0" />
          <feDiffuseLighting surfaceScale="3" diffuseConstant="0.98" lightingColor="#ffffff">
            <feDistantLight azimuth="270" elevation="46" />
          </feDiffuseLighting>
        </filter>
        <filter id="soft" x="-30%" y="-30%" width="160%" height="160%">
          <feGaussianBlur stdDeviation="14" />
        </filter>
        <filter id="wide" x="-30%" y="-30%" width="160%" height="160%">
          <feGaussianBlur stdDeviation="50" />
        </filter>
        <mask id="north" maskUnits="userSpaceOnUse" x="30" y="22" width="1490" height="3062">
          <g filter="url(#wide)">
            <path d="M520 300L900 0H1600V1500L1150 1560L950 1000L560 700Z" fill="#fff" />
            <path d="M0 880L450 780L380 1100L0 1350Z" fill="#999" />
            <path d="M1100 1300L1600 1300V2300L1250 2300Z" fill="#444" />
          </g>
        </mask>
        <clipPath id="area">
          <rect x="30" y="22" width="1490" height="3062" />
        </clipPath>
        <clipPath id="southwest">
          <path d="M30 2110L235 1560L300 1400L495 1450L440 1600L425 1830L515 1890L470 2300L740 2350L720 2490L830 2540L860 2620L720 2880L520 2760L330 2860L300 3084H30Z" />
        </clipPath>
        <clipPath id="southeast">
          <path d="M865 2300L1170 2340V3084H700L860 2860Z M1190 2160H1340V2450L1290 2500H1190ZM1295 2660H1520V2900L1300 2990Z" />
        </clipPath>
        <clipPath id="east">
          <path d="M1090 1640L1520 1560V2560L1340 2500V2150L1190 1980V2250L1100 2240L1040 1920Z" />
        </clipPath>
        <clipPath id="northwest">
          <path d="M30 150L220 60L320 40L370 240L410 520L480 700L430 760L300 660L200 500L30 440Z" />
        </clipPath>
        <clipPath id="northeast">
          <path d="M540 420L760 260L890 420L1000 560L900 640L640 620ZM1010 540L1500 250V1400L1180 1480L1020 1250L1130 1150L1000 960L1090 850L990 720Z" />
        </clipPath>
      </defs>
      <g clipPath="url(#area)">
        <rect x="30" y="22" width="1490" height="3062" fill="#b4b4b4" />
        <rect x="30" y="22" width="1490" height="3062" filter="url(#fine)" opacity="0.7" />
        <rect x="30" y="22" width="1490" height="3062" filter="url(#hills)" opacity="0.4" />
        <g mask="url(#north)" opacity="0.5">
          <g transform="rotate(-42 1000 900)">
            <rect x="-500" y="-500" width="3000" height="3000" filter="url(#streak)" />
          </g>
        </g>
        <Streets clip="southwest" angle={14} cx={400} cy={2200} gap={44} />
        <Streets clip="southwest" angle={104} cx={400} cy={2200} gap={130} />
        <Streets clip="southeast" angle={4} cx={1200} cy={2700} gap={52} />
        <Streets clip="southeast" angle={92} cx={1200} cy={2700} gap={60} />
        <Streets clip="east" angle={16} cx={1300} cy={2000} gap={48} />
        <Streets clip="east" angle={104} cx={1300} cy={2000} gap={110} />
        <Streets clip="northwest" angle={-3} cx={200} cy={350} gap={50} />
        <Streets clip="northwest" angle={80} cx={200} cy={350} gap={70} />
        <Streets clip="northeast" angle={-42} cx={1100} cy={800} gap={56} />
        {/* terrain shading */}
        <g filter="url(#soft)">
          <path d="M30 950L200 870L60 1130L30 1140Z" fill="#666" opacity=".4" />
          <path d="M1180 250L1300 170L1260 260L1190 290Z" fill="#777" opacity=".4" />
          <path d="M480 2220L620 2160L640 2260L500 2280Z" fill="#777" opacity=".4" />
          <path d="M740 2340L830 2190L820 2300L760 2380Z" fill="#888" opacity=".4" />
          <path d="M760 2400L830 2370L820 2470L745 2500Z" fill="#e4e4e4" opacity=".7" />
          <path d="M770 2490L825 2470V2520Z" fill="#777" opacity=".5" />
          <path d="M300 2500L640 2400L700 2460L420 2700Z" fill="#888" opacity=".3" />
          <path d="M1245 2550L1285 2560L1280 2790L1250 2780ZM1235 2830L1285 2850L1260 3084L1230 3084Z" fill="#444" opacity=".6" />
          <path d="M330 2680L470 2640L420 2780L310 2800Z" fill="#888" opacity=".35" />
          <path d="M120 1960L320 1960L260 2120L150 2090Z" fill="#888" opacity=".2" />
        </g>
        {/* flat pads and ponds */}
        <g fill="#b2b2b2">
          <circle cx="748" cy="1800" r="56" />
          <path d="M720 1960L770 1880L815 1920L770 1990ZM1030 1405L1100 1400L1110 1480L1060 1520L1025 1480Z" opacity=".8" />
          <path d="M815 320L895 320L888 350L825 330Z" fill="#a2a2a2" />
          <path d="M850 285L895 320H815Z" fill="#bfbfbf" />
          <path d="M455 275H512V320H455Z" fill="#989898" />
          <path d="M690 790L745 800L742 850L685 930L675 880Z" fill="#bcbcbc" opacity=".8" />
          <path d="M960 1925L1015 1935L1000 2020L950 2000ZM445 2010L490 2000V2090L445 2095Z" opacity=".8" />
          <path d="M915 835H965V880H915ZM655 1380L710 1370V1440L650 1420Z" fill="#bababa" />
        </g>
        {/* local roads */}
        <g fill="none" strokeWidth="6" opacity=".7">
          <path id="w" stroke="#c4c4c4" d="M690 750L640 960L600 1180L545 1400L500 1600L400 1960L340 2150L270 2430L230 2600L150 2900L110 3084M1190 1990L1185 2400L1160 2650L1155 2800L1165 3084M440 24L640 130L700 150L860 230L910 290L900 400L1000 530L1190 720M560 1546L640 1590L720 1600L870 1640L1000 1680M705 1570L690 1680L600 1780L570 1850L720 2030L780 2050L860 2110L960 2140L1060 2270M30 850L180 825L270 870L300 920M1190 2330L1250 2370L1300 2450L1440 2530L1510 2640M520 2760L720 2850L860 2960L920 3084M330 2960L360 2800L520 2760M1190 700L1210 900L1240 1000M690 1070L860 1060L890 1030M770 785L960 1140L1040 1260" />
          <path stroke="#858585" strokeWidth="2" d="M696 752L646 962L606 1182L551 1402L506 1602L406 1962L346 2152L276 2432L236 2602L156 2902L116 3084M1196 1990L1191 2400L1166 2650L1161 2800L1171 3084M566 1542L646 1584L726 1594L876 1634L1000 1672M711 1570L696 1682L606 1782L576 1852L726 2026L786 2046L866 2106L966 2136L1064 2264M1196 2326L1256 2366L1306 2446L1444 2524L1514 2634M526 2756L726 2846L866 2956L926 3080" />
        </g>
        {/* campus blocks and subdivisions */}
        <g fill="none" stroke="#8e8e8e" strokeWidth="2.500" opacity=".7">
          <path d="M30 295L370 265M300 90L370 240M60 2600L230 2700M240 2620L900 2860M300 2500L850 2720M330 2160L600 2260M600 1950L680 1970L720 2020" />
          <path d="M870 2310L1170 2340M870 2310L865 2430M1340 2560C1340 2640 1420 2680 1510 2690M1350 2200C1450 2180 1480 2260 1400 2280M1210 2180C1260 2150 1320 2180 1300 2270H1215M960 2470C950 2520 1000 2550 1070 2540" />
          <path d="M430 1140H560V1300H430ZM500 1140V1300M430 1220H560M640 1460H700V1546H640ZM880 1170A30 40 0 1 0 920 1270M940 1350C960 1400 960 1460 930 1500" />
          <path d="M340 3050C440 2960 560 2960 600 2860M480 3084C560 2960 600 2900 690 2860M560 3084L600 2960L660 2900M380 2920C440 2880 520 2890 560 2850M760 3084L790 2960L840 2990" />
        </g>
        {/* oval track */}
        <g fill="none" transform="rotate(-31 165 615)">
          <rect x="78" y="462" width="174" height="308" rx="87" stroke="#4a4a4a" strokeWidth="3.500" strokeDasharray="3 5" />
          <rect x="88" y="474" width="154" height="284" rx="77" stroke="#c8c8c8" strokeWidth="4" />
          <rect x="112" y="520" width="100" height="190" rx="50" stroke="#cdcdcd" strokeWidth="4" />
          <rect x="116" y="524" width="92" height="182" rx="46" stroke="#959595" strokeWidth="2.500" />
        </g>
        {/* rail and limited-access corridors */}
        <g fill="none" strokeLinejoin="round">
          <path d="M328 22L383 230L420 330L440 420L480 555L500 580L512 670" stroke="#cacaca" strokeWidth="8" opacity=".8" />
          <path d="M320 22L375 230L400 285L430 395L478 560L500 590L505 630L525 670" stroke="#2f2f2f" strokeWidth="4.500" />
          <path d="M375 270V390L402 440L410 520" stroke="#444" strokeWidth="2" strokeDasharray="14 4" />
          <path d="M522 860L470 970L410 1070L385 1150L345 1290L300 1400L232 1560L150 1770L75 1960L32 2070" stroke="#dedede" strokeWidth="6" />
          <path d="M516 860L404 1066M310 1350L225 1560L140 1770L65 1990L30 2100" stroke="#2a2a2a" strokeWidth="3" />
          <path d="M404 1070L420 1040" stroke="#000" strokeWidth="9" />
          <path d="M440 755L545 692" stroke="#222" strokeWidth="4" />
          <path d="M450 768L560 700M30 858L180 828" stroke="#dcdcdc" strokeWidth="4" />
          <path d="M420 244L510 240M505 240L512 190" stroke="#e6e6e6" strokeWidth="6" />
          <path d="M425 266L462 264M455 325L510 322" stroke="#444" strokeWidth="7" />
          <path d="M440 22L640 132M640 205L740 245L800 310M650 125L740 160L880 250" stroke="#4a4a4a" strokeWidth="2.500" />
          <path d="M515 370C515 300 520 240 600 170M640 22C620 60 625 90 645 120M545 500C570 560 590 600 620 620" stroke="#959595" strokeWidth="3" />
          <path d="M30 125L110 85L145 50V22" stroke="#0a0a0a" strokeWidth="7" />
          <path d="M36 62l14-10M62 42l24-8M66 76l20-10M32 78l14-8M96 42l18-4M54 90l14-6" stroke="#1a1a1a" strokeWidth="5" />
          <path d="M120 110C130 70 180 60 220 70M90 60l20-8" stroke="#e6e6e6" strokeWidth="4" />
          <path d="M770 785L800 850L820 930L840 960" stroke="#777" strokeWidth="6" strokeDasharray="12 5" />
          <path d="M650 1380L670 1330L668 1365Z" fill="#555" />
          <path d="M930 1342L985 1300" stroke="#4a4a4a" strokeWidth="5" />
          <path d="M1350 738L1400 715L1450 722L1520 690" stroke="#333" strokeWidth="3" />
          <path d="M1200 485L1240 460M1270 208L1300 190M880 245L930 275M1000 520L1010 540" stroke="#444" strokeWidth="3" />
          <path d="M1380 2200H1345V2230" stroke="#333" strokeWidth="2.500" />
          <path d="M1340 2330L1310 2440L1295 2480L1285 2620L1280 2660L1290 2720L1280 2795H1240M1290 2700V2830L1270 2900L1262 3084M1190 2420V2480L1250 2560" stroke="#242424" strokeWidth="3.500" strokeDasharray="40 6 22 4" />
          <path d="M1310 2990L1400 2960L1520 2920" stroke="#444" strokeWidth="2.500" />
          <path d="M1270 3010L1400 2985L1520 2950" stroke="#e6e6e6" strokeWidth="5" />
          <path d="M830 2045L850 2030L880 2028M830 2050L840 2080L875 2100L905 2090" stroke="#222" strokeWidth="4" />
          <path d="M905 2090L918 2040" stroke="#777" strokeWidth="6" />
          <path d="M1012 1940L1018 2000M1000 2140L1020 2110M808 1950L790 1985M860 1820L850 1860M750 2010L800 1990M970 2160L1010 2230" stroke="#ececec" strokeWidth="4.500" />
          <path d="M905 1985H918M800 1640l6-8M808 1672l6-20M640 1612l22-10" stroke="#111" strokeWidth="4" />
          <path d="M873 2200v20l26 22" stroke="#222" strokeWidth="2.500" strokeDasharray="6 4" />
          <path d="M830 1458L920 1466" stroke="#222" strokeWidth="4" strokeDasharray="7 5" />
          <path d="M540 2180C590 2160 575 2110 590 2090M610 2235C640 2235 655 2210 655 2190M600 1900L622 1950L640 1920M620 1985L680 1975" stroke="#dcdcdc" strokeWidth="4" opacity=".9" />
          <path d="M250 2450L245 2520M155 2640L160 2560M126 2680v22" stroke="#444" strokeWidth="2.500" />
          <path d="M300 2690L295 2760M175 2470L192 2430" stroke="#dedede" strokeWidth="6" />
        </g>
        <path d={CAMPUS} fill="none" stroke="#387ff2" strokeWidth="5" strokeLinejoin="round" vectorEffect="non-scaling-stroke" />
      </g>
    </svg>
  );
}

/* ---------- right panel ---------- */
const Combo = ({ c, w, text, arrow = true }: { c: string; w: number; text: string; arrow?: boolean }) => (
  <Raised c={`flex items-center justify-between rounded-[5px] ${c}`}>
    <T w={w} c="text-[34px] text-black">{text}</T>
    {arrow && <Tri f="#1c1c1c" c="h-[10px] w-[16px]" />}
  </Raised>
);
const Slider = ({ c }: { c: string }) => (
  <div className={`flex shrink-0 items-center ${c}`}>
    <div className="h-[8px] grow bg-[#62a3f3] shadow-[0_0_0_2px_#252525]" />
    <Raised c="h-[26px] w-[24px] rounded-[4px]" />
  </div>
);
const SmallBtn = ({ n, dim, left }: { n: string; dim?: boolean; left?: boolean }) => (
  <Raised c={`flex h-[44px] w-[52px] items-center rounded-[5px] ${left ? "pl-[12px]" : "justify-center"}`}>
    <Icon n={n} dim={dim} c="size-[28px]" />
  </Raised>
);

function Styling() {
  return (
    <div className="flex w-[954px] shrink-0 flex-col overflow-hidden pt-[2px]">
      <div className="flex h-[46px] shrink-0 items-center justify-between pl-[23px]">
        <T w={206} c="text-[34px]">Layer Styling</T>
        <div className="w-[16px] overflow-hidden">
          <WinBtns only />
        </div>
      </div>
      <Raised c="ml-[22px] mt-[7px] flex h-[57px] w-[960px] items-center rounded-[5px] pl-[8px]">
        <Icon n="polylayer" c="mb-[6px] mr-[6px] h-[24px] w-[33px]" />
        <T w={299} c="text-[34px] text-black">uky-campus-2018</T>
      </Raised>
      <div className="flex h-[1503px] shrink-0">
        <div className="relative ml-[20px] flex w-[76px] shrink-0 flex-col pb-[7px]">
          <div className="flex h-[77px] shrink-0 items-center justify-center pt-[14px]">
            <Icon n="brush" c="size-[44px]" />
          </div>
          <div className="flex grow flex-col items-center bg-[#434343] pr-[16px]">
            {["label", "mask", "cube", "threed", "brushes", "history"].map((n) => (
              <div key={n} className="flex h-[64px] items-center">
                <Icon n={n} c={n === "label" ? "mt-[14px] size-[46px]" : "size-[44px]"} />
              </div>
            ))}
          </div>
          <div className="absolute -left-[13px] top-[721px] h-[34px] w-[5px] bg-[repeating-linear-gradient(180deg,#888_0_4px,transparent_4px_6px)]" />
        </div>
        <div className="flex w-[858px] shrink-0 flex-col overflow-hidden pl-[7px]">
          <Raised c="ml-px mt-[27px] flex h-[56px] w-[900px] items-center rounded-[5px] pl-[10px]">
            <Icon n="single" c="mr-[7px] size-[29px]" />
            <T w={231} c="text-[34px] text-black">Single Symbol</T>
          </Raised>
          <div className="mt-[15px] flex h-[292px] shrink-0">
            <div className="ml-[50px] mt-[83px] h-[126px] w-[125px] shrink-0 rounded-[4px] border-[6px] border-[#337cf5]" />
            <div className="ml-[62px] h-[292px] w-[508px] shrink-0 border border-[#272727] bg-[#1e1e1e]">
              <div className="flex h-[49px] items-center bg-[#464646] pl-[12px]">
                <Tri c="h-[9px] w-[16px]" />
                <div className="ml-[17px] size-[32px] border-[3px] border-[#337cf5]" />
                <T w={47} c="ml-[13px] text-[34px] font-bold text-white">Fill</T>
              </div>
              <div className="flex h-[48px] items-center pl-[85px]">
                <div className="size-[32px] border-[3px] border-[#337cf5]" />
                <T w={164} c="ml-[12px] text-[34px]">Simple Fill</T>
              </div>
            </div>
            <div className="ml-[16px] mt-[9px] flex flex-col gap-[20px]">
              <SmallBtn n="plus" />
              <SmallBtn n="minus" dim />
              <SmallBtn n="dup" dim />
            </div>
            <div className="ml-[16px] mt-[9px] flex flex-col gap-[20px]">
              <SmallBtn n="upa" dim left />
              <SmallBtn n="downa" dim left />
              <SmallBtn n="lockb" dim left />
            </div>
          </div>
          <div className="mt-[13px] h-[2px] shrink-0 bg-[#a8a8a8]" />
          <div className="mt-[18px] flex h-[52px] shrink-0 items-center">
            <T w={84} c="text-[34px]">Color</T>
            <div className="grow" />
            <Raised c="mr-[4px] flex h-[52px] w-[672px] items-center justify-center rounded-[5px]">
              <div className="h-[32px] w-[656px] rounded-[5px] bg-[#6b9fe0]" />
            </Raised>
            <Raised c="mr-[15px] flex h-[52px] w-[21px] items-center justify-center rounded-[4px]">
              <Tri c="h-[8px] w-[14px]" />
            </Raised>
          </div>
          <div className="mt-[16px] flex h-[54px] shrink-0 items-center">
            <T w={124} c="text-[34px]">Opacity</T>
            <Slider c="ml-[17px] w-[414px]" />
            <Field c="ml-[11px] h-[52px] w-[197px] justify-between pl-[9px]">
              <T w={134} c="text-[34px]">100.0 %</T>
              <Spin c="h-[52px] w-[27px] py-[9px]" dim />
            </Field>
            <Icon n="dd" c="ml-[23px] h-[34px] w-[34px]" />
            <Tri c="ml-[9px] mt-[18px] h-[4px] w-[10px]" />
          </div>
          <div className="mt-[16px] flex h-[56px] shrink-0 items-center">
            <T w={63} c="text-[34px]">Unit</T>
            <Combo c="ml-[75px] h-[56px] w-[696px] pl-[7px] pr-[12px]" w={173} text="Millimeters" />
          </div>
          <div className="mr-[15px] mt-[10px] h-[2px] shrink-0 bg-[#a8a8a8]" />
          <div className="mt-[13px] flex h-[58px] shrink-0 items-center">
            <Field c="ml-px h-[58px] w-[775px] pl-[18px]">
              <Icon n="search" c="size-[26px]" />
              <T w={147} c="ml-[14px] text-[34px]">Favorites</T>
              <div className="grow" />
              <svg viewBox="0 0 26 21" className="mr-[18px] h-[21px] w-[26px]">
                <path d="M0 10.500L7 0H26V21H7Z" fill="#a4a4a4" />
                <path d="M11 5l9 11M20 5l-9 11" stroke="#fff" strokeWidth="2" />
              </svg>
              <Raised c="flex h-[58px] w-[39px] items-center justify-center rounded-r-[5px]">
                <Tri f="#1c1c1c" c="h-[9px] w-[15px]" />
              </Raised>
            </Field>
            <Icon n="styles" c="ml-[22px] size-[31px]" />
          </div>
          <div className="mt-[10px] flex h-[249px] w-[836px] shrink-0 overflow-hidden border border-[#272727] bg-[#1e1e1e]">
            <div className="grow pl-[9px] pr-[14px]">
              <div className="flex h-[67px] items-end border-b-2 border-[#7c7c7c] pb-[11px]">
                <T w={181} c="ml-[2px] text-[25px] font-bold">Project Styles</T>
              </div>
              <div className="flex h-[68px] items-end border-b-2 border-[#7c7c7c] pb-[10px]">
                <T w={92} c="ml-[2px] text-[25px] font-bold">Default</T>
              </div>
              <div className="mt-[50px] flex gap-[180px] pl-[86px]">
                <div className="h-[90px] w-[166px] border-2 border-black bg-[radial-gradient(circle_at_0%_0%,#1a148c,#7a22ac_35%,#b52f90_58%,#dd5a70_78%,#fa9a42_105%)]" />
                <div className="h-[90px] w-[166px] border-2 border-[#dcdcdc] bg-[#969696]" />
              </div>
            </div>
            <div className="flex w-[28px] shrink-0 flex-col bg-[#363636]">
              <ScrollBtn up />
              <div className="mt-[2px] h-[52px] border-2 border-[#555] bg-linear-to-r from-[#3a3a3a] to-[#454545]" />
              <div className="grow" />
              <ScrollBtn />
            </div>
          </div>
          <div className="mt-[10px] flex h-[48px] shrink-0 overflow-hidden pt-[6px]">
            <Raised c="ml-px mt-[6px] flex h-[56px] w-[44px] justify-center rounded-[4px] pt-[5px]">
              <Icon n="gridview" c="size-[28px]" />
            </Raised>
            <Icon n="table" c="ml-[12px] mt-[13px] size-[28px]" />
            <Raised c="ml-[287px] flex h-[60px] w-[248px] items-start rounded-[5px] pl-[6px] pt-[6px]">
              <T w={233} c="text-[34px] text-black">Save Symbol...</T>
            </Raised>
            <Raised c="ml-[16px] flex h-[60px] w-[198px] items-start rounded-[5px] pl-[5px] pt-[6px]">
              <T w={160} c="text-[34px] text-black">Advanced</T>
              <Tri c="ml-[10px] mt-[17px] h-[8px] w-[12px]" />
            </Raised>
          </div>
          <div className="mt-[18px] flex h-[62px] shrink-0 items-center pl-[5px]">
            <svg viewBox="0 0 20 14" className="h-[14px] w-[20px]">
              <path d="M1 1H19L10 13Z" fill="#484848" stroke="#151515" strokeWidth="2" />
            </svg>
            <T w={279} c="ml-[18px] text-[35px] font-bold">Layer Rendering</T>
          </div>
          <div className="ml-[2px] mt-[-6px] flex h-[334px] shrink-0 flex-col border-2 border-r-0 border-[#3d3d3d] pl-[2px] pt-[22px]">
            <div className="flex h-[56px] shrink-0 items-center">
              <T w={124} c="text-[34px]">Opacity</T>
              <Slider c="ml-[133px] w-[398px]" />
              <Field c="ml-[11px] h-[52px] w-[200px] pl-[9px]">
                <T w={134} c="text-[34px]">100.0 %</T>
                <Spin c="ml-[24px] h-[52px] w-[27px] py-[9px]" dim />
              </Field>
            </div>
            <div className="mt-[12px] flex h-[110px] shrink-0">
              <div className="flex w-[255px] shrink-0 items-center pt-[8px]">
                <T w={240} c="text-[34px]">Blending mode</T>
              </div>
              <div className="flex w-[308px] shrink-0 flex-col justify-end">
                <div className="flex h-[48px] items-center pb-[2px]">
                  <T w={87} c="text-[34px]">Layer</T>
                </div>
                <Combo c="mb-[4px] h-[56px] w-[302px] pl-[7px] pr-[11px]" w={115} text="Normal" />
              </div>
              <div className="flex w-[400px] shrink-0 flex-col justify-end">
                <div className="flex h-[48px] items-center pb-[2px]">
                  <T w={118} c="text-[34px]">Feature</T>
                </div>
                <Combo c="mb-[4px] h-[56px] w-[302px] pl-[7px] pr-[15px]" w={115} text="Normal" />
              </div>
            </div>
            <div className="flex h-[54px] shrink-0 items-center">
              <Check />
              <T w={206} c="ml-[11px] text-[34px]">Draw effects</T>
              <div className="grow" />
              <Raised c="-mr-[26px] flex h-[28px] w-[52px] items-center rounded-[4px] pl-[4px]">
                <Icon n="star" dim c="size-[26px]" />
              </Raised>
            </div>
            <div className="flex h-[56px] shrink-0 items-center">
              <Check />
              <T w={495} c="ml-[11px] text-[34px]">Control feature rendering order</T>
              <div className="grow" />
              <Raised c="-mr-[26px] flex h-[42px] w-[52px] flex-col justify-center rounded-[4px] pl-[4px] text-[14px] leading-[15px]">
                <span className="text-[#7a5454]">A</span>
                <span className="text-[#545f80]">Z</span>
              </Raised>
            </div>
          </div>
          <div className="mt-[14px] flex h-[56px] shrink-0 items-center pl-px">
            <Raised c="flex h-[42px] w-[44px] items-center justify-center rounded-[4px]">
              <Icon n="bigundo" c="size-[24px]" />
            </Raised>
            <Raised c="ml-[16px] flex h-[42px] w-[44px] items-center justify-center rounded-[4px]">
              <Icon n="bigredo" c="size-[24px]" />
            </Raised>
            <Check on c="ml-[368px]" />
            <T w={185} c="ml-[13px] text-[34px]">Live update</T>
            <Raised c="ml-[27px] flex h-[56px] w-[160px] items-center rounded-[5px] pl-[31px]">
              <T w={90} c="text-[34px] text-black">Apply</T>
            </Raised>
          </div>
        </div>
      </div>
      <div className="flex h-[62px] shrink-0 items-start border-t-2 border-[#272727] pl-[16px]">
        <div className="flex h-[61px] w-[256px] items-center rounded-b-[5px] border-2 border-t-0 border-[#505050] bg-[#323232] pl-[21px] pt-[4px]">
          <T w={207} c="text-[34px]">Layer Styling</T>
        </div>
        <div className="ml-[3px] flex h-[57px] w-[361px] items-center rounded-b-[5px] border-2 border-t-0 border-[#484848] bg-[#2a2a2a] pl-[20px] pt-[6px]">
          <T w={317} c="text-[34px]">Processing Toolbox</T>
        </div>
      </div>
    </div>
  );
}

function StatusBar() {
  return (
    <div className="flex h-[71px] shrink-0 items-center pt-[2px] text-[22px] [&_span]:translate-y-[2px]">
      <Field c="ml-[8px] h-[54px] w-[424px] pl-[15px] mt-[4px]">
        <Icon n="search" c="size-[26px]" />
        <T w={318} c="ml-[15px] text-[33px] text-[#b5b5b5]">Type to locate (⌘K)</T>
      </Field>
      <T w={273} c="ml-[19px] mt-[4px] text-black">8 legend entries removed.</T>
      <T w={114} c="ml-[1196px]">Coordinate</T>
      <Field c="ml-[7px] h-[43px] w-[236px] pl-[15px]">
        <T w={203}>5286821,3904295</T>
      </Field>
      <Icon n="mouse" c="ml-[9px] size-[32px]" />
      <T w={57} c="ml-[26px] mt-[2px]">Scale</T>
      <Field c="ml-[8px] h-[58px] w-[226px] justify-between pl-[8px] mt-[2px]">
        <T w={81}>1:24615</T>
        <Raised c="flex h-[56px] w-[39px] items-center justify-center rounded-r-[5px]">
          <Tri f="#1c1c1c" c="h-[9px] w-[15px]" />
        </Raised>
      </Field>
      <Icon n="lock" c="ml-[22px] size-[31px]" />
      <T w={98} c="ml-[15px]">Magnifier</T>
      <Field c="ml-[9px] h-[44px] w-[183px] justify-between pl-[9px]">
        <T w={58}>100%</T>
        <Spin c="h-[42px] w-[27px] py-[6px]" />
      </Field>
      <T w={87} c="ml-[20px] mt-[2px]">Rotation</T>
      <Field c="ml-[20px] h-[42px] w-[183px] justify-between pl-[10px] mt-[3px]">
        <T w={50}>0.0 °</T>
        <Spin c="h-[42px] w-[27px] py-[6px]" />
      </Field>
      <Check on c="ml-[15px]" />
      <T w={73} c="ml-[12px] mt-px">Render</T>
      <Icon n="crs" c="ml-[31px] size-[32px]" />
      <T w={119} c="ml-[4px] mt-[2px] text-black">EPSG:3089</T>
      <Icon n="bubble" c="ml-[48px] size-[33px]" />
    </div>
  );
}

export default function App() {
  return (
    <div className="flex h-[2038px] w-[3722px] flex-col overflow-hidden border-l-[4px] border-[#1b1b18] bg-[#323232] font-['Inter',sans-serif] leading-[1.2] text-[#dcdcdc]">
      <div className="relative flex h-[53px] shrink-0 items-center justify-center rounded-tl-[14px] border-b-2 border-black bg-[#37393b]">
        <div className="absolute left-[13px] top-[12px] flex gap-[16px]">
          <div className="size-[24px] rounded-full bg-[#f2605a]" />
          <div className="size-[24px] rounded-full bg-[#f8b044]" />
          <div className="size-[24px] rounded-full bg-[#49b944]" />
        </div>
        <T w={318} c="mr-[-36px] mt-[-4px] text-[24px] font-bold text-[#b0b1b2]">*Untitled Project — QGIS</T>
      </div>
      <div className="-ml-[4px] flex h-[78px] shrink-0 border-b border-[#747474] bg-linear-to-b from-[#363636] to-[#303030] shadow-[inset_0_-3px_0_#2a2a2a]">
        <Tools s="|| new open save layout layoutmgr styles | hand -pansel zoomin zoomout zoomfull -zoomsel zoomlayer -zoom11 zoomprev -zoomnext newmap new3d bookmark bookmarks clock refresh | select v selform v desel v selloc v | identify abacus gear sigma table v measure v tip -action v | dots | magnet -snapv> -snapdots>" />
        <Field c="ml-[6px] h-[50px] w-[239px] justify-between self-center pl-[8px]">
          <T w={34} c="text-[34px] text-[#6a6a6a]">12</T>
          <Spin c="h-[50px] w-[28px] py-[9px]" />
        </Field>
        <Raised c="ml-[6px] mr-[3px] flex h-[57px] w-[244px] items-center justify-between self-center rounded-[5px] pl-[8px] pr-[13px]">
          <T w={37} c="text-[34px] text-[#777]">px</T>
          <Tri f="#252525" c="h-[9px] w-[16px]" />
        </Raised>
        <Tools s="topo overlap> -cross -bolt v -trace" />
      </div>
      <div className="-ml-[4px] flex h-[78px] shrink-0 border-b border-[#747474] bg-linear-to-b from-[#363636] to-[#303030] shadow-[inset_0_-3px_0_#2a2a2a]">
        <Tools s="|| addlayers gpkg shp feather chip mesh virtual | -pencils> pencil -saveedit -line v -addpoly -vertex v -multiedit -trash -cut -copy -paste -undo -redo | label diagram / labelpin labelred / -labelpin2 -labeleye -labelmove -labelrot -labeledit | metasearch | python grid | help |" />
      </div>
      <div className="-ml-[4px] flex h-[76px] shrink-0 border-b-2 border-[#7b7b7b] bg-linear-to-b from-[#363636] to-[#303030] shadow-[inset_0_-3px_0_#2a2a2a]">
        <Tools s="|| osmfind osm | relief | dock -target / gpspoint> -gpsadd gpspoly -gpshand / info wrench> | signal" />
      </div>
      <div className="flex h-[1679px] shrink-0">
        <div className="relative flex w-[842px] shrink-0 flex-col pr-[15px] pt-[2px]">
          <Browser />
          <Layers />
          <div className="absolute right-[4px] top-[828px] h-[34px] w-[5px] bg-[repeating-linear-gradient(180deg,#888_0_4px,transparent_4px_6px)]" />
        </div>
        <div className="mt-[3px] flex w-[1922px] shrink-0 bg-white pl-[608px] pt-[112px]">
          <Hillshade />
        </div>
        <Styling />
      </div>
      <StatusBar />
      <div className="-ml-[4px] h-[4px] shrink-0 border-t-2 border-[#5a5a5a] bg-[#12120e]" />
    </div>
  );
}
